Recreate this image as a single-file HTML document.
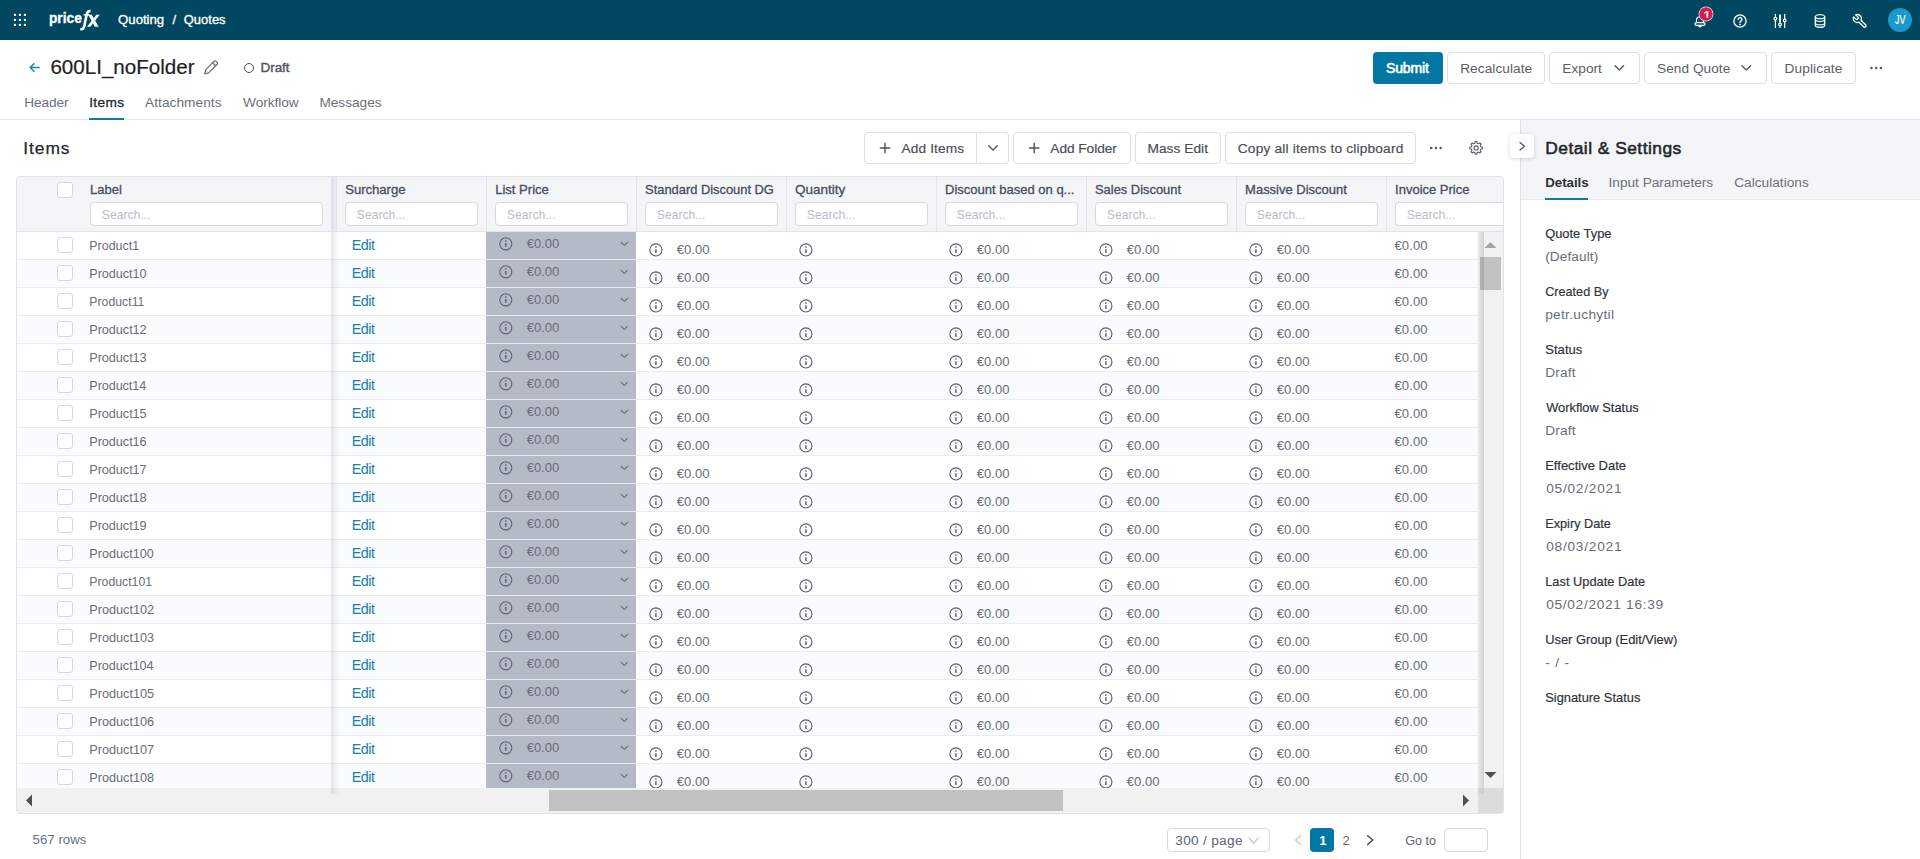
<!DOCTYPE html>
<html><head><meta charset="utf-8"><title>Quote 600LI_noFolder</title><style>html,body{margin:0;padding:0}body{width:1920px;height:859px;position:relative;overflow:hidden;background:#fff;font-family:"Liberation Sans",sans-serif}
body div,body span,body svg{position:absolute}span{white-space:pre;line-height:20px;height:20px}
.r{left:0;width:1461px;height:28px;border-bottom:1px solid #e9ebf1;box-sizing:border-box}
.cb{position:absolute;left:40px;top:5px;width:16px;height:16px;border:1px solid #d3d7e0;border-radius:3px;background:#fff;box-sizing:border-box}
.lp{position:absolute;left:469px;top:0;width:150px;height:27px;background:#b5bac7}
</style></head><body>
<div style="left:0px;top:0px;width:1920px;height:40px;background:#004861"></div>
<svg style="left:13px;top:13px" width="13.4" height="13.4" viewBox="-0.8 -0.8 13.4 13.4" fill="#fff"><rect x="0" y="0" width="2.3" height="2.3" rx="0.8"/><rect x="5" y="0" width="2.3" height="2.3" rx="0.8"/><rect x="10" y="0" width="2.3" height="2.3" rx="0.8"/><rect x="0" y="5" width="2.3" height="2.3" rx="0.8"/><rect x="5" y="5" width="2.3" height="2.3" rx="0.8"/><rect x="10" y="5" width="2.3" height="2.3" rx="0.8"/><rect x="0" y="10" width="2.3" height="2.3" rx="0.8"/><rect x="5" y="10" width="2.3" height="2.3" rx="0.8"/><rect x="10" y="10" width="2.3" height="2.3" rx="0.8"/></svg>
<span style="left:48.89px;top:8px;font-size:15px;font-weight:700;color:#fff;transform:scaleX(0.914);transform-origin:0 0;-webkit-text-stroke:0.35px #fff;">price</span>
<svg style="left:78px;top:8px" width="25" height="25" viewBox="0 0 25 25" fill="#fff" stroke="none"><path d="M2.3 21.1C4.9 21.7 5.8 20.2 6.4 17.4L8.5 7.2C9.1 4 10.3 2.6 12.6 3" fill="none" stroke="#fff" stroke-width="2.6" stroke-linecap="butt"/><path d="M5.6 6.9H11.6" fill="none" stroke="#fff" stroke-width="1.5"/><polygon points="10.2,6.8 13.8,6.8 20.6,18.7 16.8,18.7"/><polygon points="18.4,6.8 21.7,6.8 12.4,18.7 9,18.7"/></svg>
<span style="left:118.1px;top:10px;font-size:13.2px;letter-spacing:-0.02px;color:#fff;-webkit-text-stroke:0.35px #fff;">Quoting</span>
<span style="left:172.4px;top:10px;font-size:13px;color:#fff;-webkit-text-stroke:0.3px #fff;">/</span>
<span style="left:183.8px;top:10px;font-size:12.9px;letter-spacing:0.04px;color:#fff;-webkit-text-stroke:0.35px #fff;">Quotes</span>
<svg style="left:1693px;top:14px" width="15" height="16" viewBox="0 0 15 16" fill="none" stroke="#fff" stroke-width="1.15" stroke-linejoin="round" stroke-linecap="round"><path d="M3.5 8.6V6.2a3.5 3.5 0 0 1 7 0v2.4"/><rect x="2" y="8.6" width="10" height="2.8" rx="1.3"/><path d="M5.5 11.9a1.6 1.6 0 0 0 3 0"/></svg>
<svg style="left:1698px;top:6px" width="17" height="17" viewBox="0 0 17 17"><circle cx="8" cy="8" r="7.45" fill="#e2ebee"/><circle cx="8" cy="8" r="6.75" fill="#dc1850"/><path d="M6.2 7.2L9.2 5.3" stroke="#fff" stroke-width="1.3" fill="none"/><path d="M9.35 5.1V11.8" stroke="#fff" stroke-width="1.75" fill="none"/></svg>
<svg style="left:1732px;top:13px" width="17" height="17" viewBox="0 0 17 17" fill="none" stroke="#fff" stroke-width="1.35" stroke-linecap="round"><circle cx="8" cy="8" r="6.1"/><path d="M6.2 6.4a1.85 1.85 0 1 1 2.7 1.65c-.6.33-.9.7-.9 1.35"/><circle cx="8" cy="11.3" r=".55" fill="#fff" stroke-width=".6"/></svg>
<svg style="left:1772px;top:12px" width="17" height="18" viewBox="0 0 17 18" fill="none" stroke="#fff" stroke-width="1.25" stroke-linecap="round"><path d="M3.4 2.4v2.9M3.4 8.2v7.2M12.7 2.4v4.6M12.7 9.9v5.5M8 13.9v1.5"/><path d="M8 2.6v8.2" stroke-width="1.9" stroke-linecap="butt"/><circle cx="3.4" cy="6.75" r="1.35"/><circle cx="8" cy="12.4" r="1.35"/><circle cx="12.7" cy="8.45" r="1.35"/></svg>
<svg style="left:1813px;top:13px" width="15" height="17" viewBox="0 0 15 17" fill="none" stroke="#fff" stroke-width="1.3"><ellipse cx="7" cy="3.7" rx="4.7" ry="2"/><path d="M2.3 3.7v8.6c0 1.2 2.1 2.1 4.7 2.1s4.7-.9 4.7-2.1V3.7"/><path d="M2.3 6.6c0 1.1 2.1 1.9 4.7 1.9s4.7-.8 4.7-1.9M2.3 9.9c0 1.1 2.1 1.9 4.7 1.9s4.7-.8 4.7-1.9" stroke-width="1.15"/></svg>
<svg style="left:1852px;top:13px" width="17" height="17" viewBox="0 -0.3 25.5 25.5" fill="none" stroke="#fff" stroke-width="1.95" stroke-linejoin="round" stroke-linecap="round"><g transform="translate(24 0) scale(-1 1)"><path d="M14.7 6.3a1 1 0 0 0 0 1.4l1.6 1.6a1 1 0 0 0 1.4 0l3.77-3.77a6 6 0 0 1-7.94 7.94l-6.91 6.91a2.12 2.12 0 0 1-3-3l6.91-6.91a6 6 0 0 1 7.94-7.94l-3.76 3.76z"/></g></svg>
<div style="left:1888px;top:8px;width:24px;height:24px;border-radius:50%;background:#1b98cf"></div>
<span style="left:1895px;top:10px;font-size:13.4px;color:#fff;transform:scaleX(0.669);transform-origin:0 0;-webkit-text-stroke:0.2px #fff;">JV</span>
<svg style="left:28px;top:61px" width="15" height="14" viewBox="0 0 15 14" fill="none" stroke="#1483ae" stroke-width="1.5" stroke-linecap="round" stroke-linejoin="round"><path d="M11.2 6.5H2.4M6 2.7L2.2 6.5 6 10.3"/></svg>
<span style="left:50.4px;top:57px;font-size:20.6px;letter-spacing:-0.01px;color:#1f2125;-webkit-text-stroke:0.2px #1f2125;">600LI_noFolder</span>
<svg style="left:202px;top:59px" width="19" height="18" viewBox="0 0 19 18" fill="none" stroke="#6a6f7c" stroke-width="1.25" stroke-linejoin="round"><path d="M11.9 2.4a1.55 1.55 0 0 1 2.2 0l.9.9a1.55 1.55 0 0 1 0 2.2L6.6 13.9l-3.9 1 .9-4z"/><path d="M10.6 3.7l3.1 3.1"/></svg>
<div style="left:243.8px;top:62.8px;width:10.4px;height:10.4px;border-radius:50%;border:1.2px solid #4a4e57;box-sizing:border-box"></div>
<span style="left:260.6px;top:58px;font-size:13.5px;letter-spacing:-0.08px;color:#50535b;-webkit-text-stroke:0.4px #50535b;">Draft</span>
<span style="left:24.2px;top:93px;font-size:13.7px;letter-spacing:-0.1px;color:#6d7078;">Header</span>
<span style="left:89.2px;top:93px;font-size:13.7px;letter-spacing:0.38px;color:#25272c;-webkit-text-stroke:0.3px #25272c;">Items</span>
<span style="left:145.1px;top:93px;font-size:13.7px;letter-spacing:0.03px;color:#6d7078;">Attachments</span>
<span style="left:243.1px;top:93px;font-size:13.7px;letter-spacing:-0.06px;color:#6d7078;">Workflow</span>
<span style="left:319.4px;top:93px;font-size:13.7px;letter-spacing:-0.03px;color:#6d7078;">Messages</span>
<div style="left:0px;top:119px;width:1920px;height:1px;background:#e6e8ef"></div>
<div style="left:89px;top:117.5px;width:35px;height:2px;background:#0f7aa5"></div>
<div style="left:1373px;top:52px;width:70px;height:32px;background:#0078a3;border-radius:4px"></div>
<span style="left:1386px;top:58px;font-size:14px;letter-spacing:-0.16px;color:#fff;-webkit-text-stroke:0.6px #fff;">Submit</span>
<div style="left:1447px;top:52px;width:98px;height:32px;border:1px solid #dcdfe7;border-radius:4px;background:#fff;box-sizing:border-box"></div>
<span style="left:1460.2px;top:59px;font-size:13.7px;letter-spacing:0.05px;color:#5b5e66;">Recalculate</span>
<div style="left:1549px;top:52px;width:91px;height:32px;border:1px solid #dcdfe7;border-radius:4px;background:#fff;box-sizing:border-box"></div>
<span style="left:1562.3px;top:59px;font-size:13.7px;color:#5b5e66;">Export</span>
<div style="left:1644px;top:52px;width:123px;height:32px;border:1px solid #dcdfe7;border-radius:4px;background:#fff;box-sizing:border-box"></div>
<span style="left:1657.1px;top:59px;font-size:13.6px;letter-spacing:0.06px;color:#5b5e66;">Send Quote</span>
<div style="left:1771px;top:52px;width:85px;height:32px;border:1px solid #dcdfe7;border-radius:4px;background:#fff;box-sizing:border-box"></div>
<span style="left:1784.6px;top:59px;font-size:13.7px;letter-spacing:0.09px;color:#5b5e66;">Duplicate</span>
<svg style="left:1613px;top:64px" width="12" height="8" viewBox="-0.8 -0.5 12 8" fill="none" stroke="#555960" stroke-width="1.4" stroke-linecap="round" stroke-linejoin="round"><path d="M1.2 1.2L5.5 5.4 9.8 1.2"/></svg>
<svg style="left:1740px;top:64px" width="12" height="8" viewBox="-0.8 -0.5 12 8" fill="none" stroke="#555960" stroke-width="1.4" stroke-linecap="round" stroke-linejoin="round"><path d="M1.2 1.2L5.5 5.4 9.8 1.2"/></svg>
<svg style="left:1869px;top:65px" width="15" height="7" viewBox="0 0 15 7" fill="#50545c"><circle cx="2.45" cy="2.9" r="1.25"/><circle cx="7.15" cy="2.9" r="1.25"/><circle cx="11.85" cy="2.9" r="1.25"/></svg>
<span style="left:23.3px;top:138px;font-size:17.4px;letter-spacing:0.93px;color:#25272c;-webkit-text-stroke:0.25px #25272c;">Items</span>
<div style="left:864px;top:132px;width:145px;height:32px;border:1px solid #dcdfe7;border-radius:4px;background:#fff;box-sizing:border-box"></div>
<div style="left:976px;top:133px;width:1px;height:30px;background:#dcdfe7"></div>
<div style="left:1013px;top:132px;width:118px;height:32px;border:1px solid #dcdfe7;border-radius:4px;background:#fff;box-sizing:border-box"></div>
<div style="left:1135px;top:132px;width:86px;height:32px;border:1px solid #dcdfe7;border-radius:4px;background:#fff;box-sizing:border-box"></div>
<div style="left:1225px;top:132px;width:191px;height:32px;border:1px solid #dcdfe7;border-radius:4px;background:#fff;box-sizing:border-box"></div>
<svg style="left:879px;top:142px" width="12" height="12" viewBox="-0.5 -0.5 12 12" stroke="#4d5058" stroke-width="1.4" stroke-linecap="round"><path d="M5.5 .8v9.4M.8 5.5h9.4"/></svg>
<svg style="left:1028px;top:142px" width="12" height="12" viewBox="-0.7 -0.5 12 12" stroke="#4d5058" stroke-width="1.4" stroke-linecap="round"><path d="M5.5 .8v9.4M.8 5.5h9.4"/></svg>
<span style="left:901.6px;top:139px;font-size:13.7px;letter-spacing:0.1px;color:#4c4f57;-webkit-text-stroke:0.2px #4c4f57;">Add Items</span>
<span style="left:1050.3px;top:139px;font-size:13.7px;letter-spacing:-0.04px;color:#4c4f57;-webkit-text-stroke:0.2px #4c4f57;">Add Folder</span>
<span style="left:1147.5px;top:139px;font-size:13.7px;letter-spacing:0.05px;color:#4c4f57;-webkit-text-stroke:0.2px #4c4f57;">Mass Edit</span>
<span style="left:1237.8px;top:139px;font-size:13.7px;letter-spacing:0.19px;color:#4c4f57;-webkit-text-stroke:0.2px #4c4f57;">Copy all items to clipboard</span>
<svg style="left:987px;top:144px" width="12" height="8" viewBox="-0.5 -0.5 12 8" fill="none" stroke="#555960" stroke-width="1.4" stroke-linecap="round" stroke-linejoin="round"><path d="M1.2 1.2L5.5 5.4 9.8 1.2"/></svg>
<svg style="left:1429px;top:145px" width="15" height="7" viewBox="0 0 15 7" fill="#50545c"><circle cx="2.25" cy="2.9" r="1.25"/><circle cx="6.95" cy="2.9" r="1.25"/><circle cx="11.65" cy="2.9" r="1.25"/></svg>
<svg style="left:1468px;top:139px" width="17" height="17" viewBox="-0.1 -0.9 17 17" fill="none" stroke="#5f636c" stroke-width="1.15" stroke-linejoin="round"><circle cx="8" cy="8" r="2.1" stroke-width="1.15"/><path d="M6.87 3.28L7.15 1.71L8.85 1.71L9.13 3.28L10.53 3.86L11.85 2.95L13.05 4.15L12.14 5.47L12.72 6.87L14.29 7.15L14.29 8.85L12.72 9.13L12.14 10.53L13.05 11.85L11.85 13.05L10.53 12.14L9.13 12.72L8.85 14.29L7.15 14.29L6.87 12.72L5.47 12.14L4.15 13.05L2.95 11.85L3.86 10.53L3.28 9.13L1.71 8.85L1.71 7.15L3.28 6.87L3.86 5.47L2.95 4.15L4.15 2.95L5.47 3.86z"/></svg>
<div style="left:16px;top:176px;width:1488px;height:638px;border:1px solid #dfe2ea;border-radius:4px;box-sizing:border-box;background:#fff"></div>
<div style="left:17px;top:177px;width:1486px;height:54px;background:#f4f5f7;border-radius:3px 3px 0 0"></div>
<div style="left:17px;top:231px;width:1486px;height:1px;background:#dfe2ea"></div>
<div style="left:486px;top:177px;width:1px;height:54px;background:#e2e5ec"></div>
<div style="left:636px;top:177px;width:1px;height:54px;background:#e2e5ec"></div>
<div style="left:786px;top:177px;width:1px;height:54px;background:#e2e5ec"></div>
<div style="left:936px;top:177px;width:1px;height:54px;background:#e2e5ec"></div>
<div style="left:1086px;top:177px;width:1px;height:54px;background:#e2e5ec"></div>
<div style="left:1236px;top:177px;width:1px;height:54px;background:#e2e5ec"></div>
<div style="left:1386px;top:177px;width:1px;height:54px;background:#e2e5ec"></div>
<div style="left:331px;top:177px;width:6px;height:54px;background:linear-gradient(90deg,#dcdee5,#f0f1f5)"></div>
<div style="left:336px;top:177px;width:1px;height:54px;background:#dfe2e9"></div>
<div style="left:57px;top:182px;width:16px;height:16px;border:1px solid #d3d7e0;border-radius:3px;background:#fff;box-sizing:border-box"></div>
<span style="left:90px;top:180px;font-size:13px;letter-spacing:0.05px;color:#474d5e;-webkit-text-stroke:0.3px #474d5e;">Label</span>
<div style="left:90px;top:202px;width:233px;height:24px;border:1px solid #d9d9d9;border-radius:4px;background:#fff;box-sizing:border-box"></div>
<span style="left:101.8px;top:205px;font-size:12.1px;letter-spacing:0.03px;color:#b9bdc6;">Search...</span>
<span style="left:345.2px;top:180px;font-size:13.2px;letter-spacing:-0.06px;color:#474d5e;-webkit-text-stroke:0.3px #474d5e;">Surcharge</span>
<div style="left:345px;top:202px;width:133px;height:24px;border:1px solid #d9d9d9;border-radius:4px;background:#fff;box-sizing:border-box"></div>
<span style="left:356.8px;top:205px;font-size:12.1px;letter-spacing:0.02px;color:#b9bdc6;">Search...</span>
<span style="left:495.2px;top:180px;font-size:13.1px;letter-spacing:-0.02px;color:#474d5e;-webkit-text-stroke:0.3px #474d5e;">List Price</span>
<div style="left:495px;top:202px;width:133px;height:24px;border:1px solid #d9d9d9;border-radius:4px;background:#fff;box-sizing:border-box"></div>
<span style="left:506.8px;top:205px;font-size:12.1px;letter-spacing:0.02px;color:#b9bdc6;">Search...</span>
<span style="left:645.1px;top:180px;font-size:12.9px;letter-spacing:-0.01px;color:#474d5e;-webkit-text-stroke:0.3px #474d5e;">Standard Discount DG</span>
<div style="left:645px;top:202px;width:133px;height:24px;border:1px solid #d9d9d9;border-radius:4px;background:#fff;box-sizing:border-box"></div>
<span style="left:656.8px;top:205px;font-size:12.1px;letter-spacing:0.03px;color:#b9bdc6;">Search...</span>
<span style="left:795px;top:180px;font-size:13.5px;color:#474d5e;-webkit-text-stroke:0.3px #474d5e;">Quantity</span>
<div style="left:795px;top:202px;width:133px;height:24px;border:1px solid #d9d9d9;border-radius:4px;background:#fff;box-sizing:border-box"></div>
<span style="left:806.8px;top:205px;font-size:12.1px;letter-spacing:0.03px;color:#b9bdc6;">Search...</span>
<span style="left:945.1px;top:180px;font-size:13px;letter-spacing:0px;color:#474d5e;-webkit-text-stroke:0.3px #474d5e;">Discount based on q...</span>
<div style="left:945px;top:202px;width:133px;height:24px;border:1px solid #d9d9d9;border-radius:4px;background:#fff;box-sizing:border-box"></div>
<span style="left:956.8px;top:205px;font-size:12.1px;letter-spacing:0.03px;color:#b9bdc6;">Search...</span>
<span style="left:1095px;top:180px;font-size:12.9px;color:#474d5e;-webkit-text-stroke:0.3px #474d5e;">Sales Discount</span>
<div style="left:1095px;top:202px;width:133px;height:24px;border:1px solid #d9d9d9;border-radius:4px;background:#fff;box-sizing:border-box"></div>
<span style="left:1106.8px;top:205px;font-size:12.1px;letter-spacing:0.03px;color:#b9bdc6;">Search...</span>
<span style="left:1245.1px;top:180px;font-size:13px;letter-spacing:-0.01px;color:#474d5e;-webkit-text-stroke:0.3px #474d5e;">Massive Discount</span>
<div style="left:1245px;top:202px;width:133px;height:24px;border:1px solid #d9d9d9;border-radius:4px;background:#fff;box-sizing:border-box"></div>
<span style="left:1256.8px;top:205px;font-size:12.1px;letter-spacing:0.03px;color:#b9bdc6;">Search...</span>
<span style="left:1395.1px;top:180px;font-size:13px;letter-spacing:-0.01px;color:#474d5e;-webkit-text-stroke:0.3px #474d5e;">Invoice Price</span>
<div style="left:1395px;top:202px;width:108px;height:24px;border:1px solid #d9d9d9;border-right:0;border-radius:4px 0 0 4px;background:#fff;box-sizing:border-box"></div>
<span style="left:1406.8px;top:205px;font-size:12.1px;letter-spacing:0.03px;color:#b9bdc6;">Search...</span>
<div style="left:17px;top:232px;width:1461px;height:556px;overflow:hidden">
<div class="r" style="top:0px;background:#fff">
<i class="cb"></i><i class="lp"></i>
<span style="left:72.3px;top:4px;font-size:12.4px;letter-spacing:0.03px;color:#6a6d75;">Product1</span>
<span style="left:334.7px;top:3px;font-size:14.3px;letter-spacing:-0.43px;color:#1a80a8;">Edit</span>
<svg class="" style="left:481px;top:4px" width="16" height="16" viewBox="-0.3 -0.3 16 16" fill="none" stroke="#5d616b" stroke-width="1.12"><circle cx="7.5" cy="7.5" r="6.05"/><path d="M7.5 6.8v3.7" stroke-width="1.45"/><circle cx="7.5" cy="4.65" r=".55" fill="#5d616b" stroke-width=".6"/></svg>
<span style="left:509.7px;top:2px;font-size:13.1px;letter-spacing:-0.02px;color:#6a6d75;">€0.00</span>
<svg style="left:603px;top:9px" width="9" height="7" viewBox="-0.3 -0.3 9 7" fill="none" stroke="#5c6069" stroke-width="1.05" stroke-linecap="round" stroke-linejoin="round"><path d="M.9 1.1L4 4.2 7.1 1.1"/></svg>
<svg class="" style="left:631px;top:10px" width="16" height="16" viewBox="-0.4 -0.4 16 16" fill="none" stroke="#5d616b" stroke-width="1.12"><circle cx="7.5" cy="7.5" r="6.05"/><path d="M7.5 6.8v3.7" stroke-width="1.45"/><circle cx="7.5" cy="4.65" r=".55" fill="#5d616b" stroke-width=".6"/></svg>
<span style="left:659.7px;top:8px;font-size:13.1px;letter-spacing:0.03px;color:#6a6d75;">€0.00</span>
<svg class="" style="left:781px;top:10px" width="16" height="16" viewBox="-0.4 -0.4 16 16" fill="none" stroke="#5d616b" stroke-width="1.12"><circle cx="7.5" cy="7.5" r="6.05"/><path d="M7.5 6.8v3.7" stroke-width="1.45"/><circle cx="7.5" cy="4.65" r=".55" fill="#5d616b" stroke-width=".6"/></svg>
<svg class="" style="left:931px;top:10px" width="16" height="16" viewBox="-0.4 -0.4 16 16" fill="none" stroke="#5d616b" stroke-width="1.12"><circle cx="7.5" cy="7.5" r="6.05"/><path d="M7.5 6.8v3.7" stroke-width="1.45"/><circle cx="7.5" cy="4.65" r=".55" fill="#5d616b" stroke-width=".6"/></svg>
<span style="left:959.7px;top:8px;font-size:13.1px;letter-spacing:0.03px;color:#6a6d75;">€0.00</span>
<svg class="" style="left:1081px;top:10px" width="16" height="16" viewBox="-0.4 -0.4 16 16" fill="none" stroke="#5d616b" stroke-width="1.12"><circle cx="7.5" cy="7.5" r="6.05"/><path d="M7.5 6.8v3.7" stroke-width="1.45"/><circle cx="7.5" cy="4.65" r=".55" fill="#5d616b" stroke-width=".6"/></svg>
<span style="left:1109.7px;top:8px;font-size:13.1px;letter-spacing:0.02px;color:#6a6d75;">€0.00</span>
<svg class="" style="left:1231px;top:10px" width="16" height="16" viewBox="-0.4 -0.4 16 16" fill="none" stroke="#5d616b" stroke-width="1.12"><circle cx="7.5" cy="7.5" r="6.05"/><path d="M7.5 6.8v3.7" stroke-width="1.45"/><circle cx="7.5" cy="4.65" r=".55" fill="#5d616b" stroke-width=".6"/></svg>
<span style="left:1259.7px;top:8px;font-size:13.1px;letter-spacing:0.02px;color:#6a6d75;">€0.00</span>
<span style="left:1377.5px;top:4px;font-size:13.1px;letter-spacing:0.07px;color:#6a6d75;">€0.00</span>
</div>
<div class="r" style="top:28px;background:#fafbfd">
<i class="cb"></i><i class="lp"></i>
<span style="left:72.3px;top:4px;font-size:12.6px;letter-spacing:-0.04px;color:#6a6d75;">Product10</span>
<span style="left:334.7px;top:3px;font-size:14.3px;letter-spacing:-0.43px;color:#1a80a8;">Edit</span>
<svg class="" style="left:481px;top:4px" width="16" height="16" viewBox="-0.3 -0.3 16 16" fill="none" stroke="#5d616b" stroke-width="1.12"><circle cx="7.5" cy="7.5" r="6.05"/><path d="M7.5 6.8v3.7" stroke-width="1.45"/><circle cx="7.5" cy="4.65" r=".55" fill="#5d616b" stroke-width=".6"/></svg>
<span style="left:509.7px;top:2px;font-size:13.1px;letter-spacing:-0.02px;color:#6a6d75;">€0.00</span>
<svg style="left:603px;top:9px" width="9" height="7" viewBox="-0.3 -0.3 9 7" fill="none" stroke="#5c6069" stroke-width="1.05" stroke-linecap="round" stroke-linejoin="round"><path d="M.9 1.1L4 4.2 7.1 1.1"/></svg>
<svg class="" style="left:631px;top:10px" width="16" height="16" viewBox="-0.4 -0.4 16 16" fill="none" stroke="#5d616b" stroke-width="1.12"><circle cx="7.5" cy="7.5" r="6.05"/><path d="M7.5 6.8v3.7" stroke-width="1.45"/><circle cx="7.5" cy="4.65" r=".55" fill="#5d616b" stroke-width=".6"/></svg>
<span style="left:659.7px;top:8px;font-size:13.1px;letter-spacing:0.03px;color:#6a6d75;">€0.00</span>
<svg class="" style="left:781px;top:10px" width="16" height="16" viewBox="-0.4 -0.4 16 16" fill="none" stroke="#5d616b" stroke-width="1.12"><circle cx="7.5" cy="7.5" r="6.05"/><path d="M7.5 6.8v3.7" stroke-width="1.45"/><circle cx="7.5" cy="4.65" r=".55" fill="#5d616b" stroke-width=".6"/></svg>
<svg class="" style="left:931px;top:10px" width="16" height="16" viewBox="-0.4 -0.4 16 16" fill="none" stroke="#5d616b" stroke-width="1.12"><circle cx="7.5" cy="7.5" r="6.05"/><path d="M7.5 6.8v3.7" stroke-width="1.45"/><circle cx="7.5" cy="4.65" r=".55" fill="#5d616b" stroke-width=".6"/></svg>
<span style="left:959.7px;top:8px;font-size:13.1px;letter-spacing:0.03px;color:#6a6d75;">€0.00</span>
<svg class="" style="left:1081px;top:10px" width="16" height="16" viewBox="-0.4 -0.4 16 16" fill="none" stroke="#5d616b" stroke-width="1.12"><circle cx="7.5" cy="7.5" r="6.05"/><path d="M7.5 6.8v3.7" stroke-width="1.45"/><circle cx="7.5" cy="4.65" r=".55" fill="#5d616b" stroke-width=".6"/></svg>
<span style="left:1109.7px;top:8px;font-size:13.1px;letter-spacing:0.02px;color:#6a6d75;">€0.00</span>
<svg class="" style="left:1231px;top:10px" width="16" height="16" viewBox="-0.4 -0.4 16 16" fill="none" stroke="#5d616b" stroke-width="1.12"><circle cx="7.5" cy="7.5" r="6.05"/><path d="M7.5 6.8v3.7" stroke-width="1.45"/><circle cx="7.5" cy="4.65" r=".55" fill="#5d616b" stroke-width=".6"/></svg>
<span style="left:1259.7px;top:8px;font-size:13.1px;letter-spacing:0.02px;color:#6a6d75;">€0.00</span>
<span style="left:1377.5px;top:4px;font-size:13.1px;letter-spacing:0.07px;color:#6a6d75;">€0.00</span>
</div>
<div class="r" style="top:56px;background:#fff">
<i class="cb"></i><i class="lp"></i>
<span style="left:72.3px;top:4px;font-size:12.2px;letter-spacing:0.05px;color:#6a6d75;">Product11</span>
<span style="left:334.7px;top:3px;font-size:14.3px;letter-spacing:-0.43px;color:#1a80a8;">Edit</span>
<svg class="" style="left:481px;top:4px" width="16" height="16" viewBox="-0.3 -0.3 16 16" fill="none" stroke="#5d616b" stroke-width="1.12"><circle cx="7.5" cy="7.5" r="6.05"/><path d="M7.5 6.8v3.7" stroke-width="1.45"/><circle cx="7.5" cy="4.65" r=".55" fill="#5d616b" stroke-width=".6"/></svg>
<span style="left:509.7px;top:2px;font-size:13.1px;letter-spacing:-0.02px;color:#6a6d75;">€0.00</span>
<svg style="left:603px;top:9px" width="9" height="7" viewBox="-0.3 -0.3 9 7" fill="none" stroke="#5c6069" stroke-width="1.05" stroke-linecap="round" stroke-linejoin="round"><path d="M.9 1.1L4 4.2 7.1 1.1"/></svg>
<svg class="" style="left:631px;top:10px" width="16" height="16" viewBox="-0.4 -0.4 16 16" fill="none" stroke="#5d616b" stroke-width="1.12"><circle cx="7.5" cy="7.5" r="6.05"/><path d="M7.5 6.8v3.7" stroke-width="1.45"/><circle cx="7.5" cy="4.65" r=".55" fill="#5d616b" stroke-width=".6"/></svg>
<span style="left:659.7px;top:8px;font-size:13.1px;letter-spacing:0.03px;color:#6a6d75;">€0.00</span>
<svg class="" style="left:781px;top:10px" width="16" height="16" viewBox="-0.4 -0.4 16 16" fill="none" stroke="#5d616b" stroke-width="1.12"><circle cx="7.5" cy="7.5" r="6.05"/><path d="M7.5 6.8v3.7" stroke-width="1.45"/><circle cx="7.5" cy="4.65" r=".55" fill="#5d616b" stroke-width=".6"/></svg>
<svg class="" style="left:931px;top:10px" width="16" height="16" viewBox="-0.4 -0.4 16 16" fill="none" stroke="#5d616b" stroke-width="1.12"><circle cx="7.5" cy="7.5" r="6.05"/><path d="M7.5 6.8v3.7" stroke-width="1.45"/><circle cx="7.5" cy="4.65" r=".55" fill="#5d616b" stroke-width=".6"/></svg>
<span style="left:959.7px;top:8px;font-size:13.1px;letter-spacing:0.03px;color:#6a6d75;">€0.00</span>
<svg class="" style="left:1081px;top:10px" width="16" height="16" viewBox="-0.4 -0.4 16 16" fill="none" stroke="#5d616b" stroke-width="1.12"><circle cx="7.5" cy="7.5" r="6.05"/><path d="M7.5 6.8v3.7" stroke-width="1.45"/><circle cx="7.5" cy="4.65" r=".55" fill="#5d616b" stroke-width=".6"/></svg>
<span style="left:1109.7px;top:8px;font-size:13.1px;letter-spacing:0.02px;color:#6a6d75;">€0.00</span>
<svg class="" style="left:1231px;top:10px" width="16" height="16" viewBox="-0.4 -0.4 16 16" fill="none" stroke="#5d616b" stroke-width="1.12"><circle cx="7.5" cy="7.5" r="6.05"/><path d="M7.5 6.8v3.7" stroke-width="1.45"/><circle cx="7.5" cy="4.65" r=".55" fill="#5d616b" stroke-width=".6"/></svg>
<span style="left:1259.7px;top:8px;font-size:13.1px;letter-spacing:0.02px;color:#6a6d75;">€0.00</span>
<span style="left:1377.5px;top:4px;font-size:13.1px;letter-spacing:0.07px;color:#6a6d75;">€0.00</span>
</div>
<div class="r" style="top:84px;background:#fafbfd">
<i class="cb"></i><i class="lp"></i>
<span style="left:72.3px;top:4px;font-size:12.7px;letter-spacing:-0.06px;color:#6a6d75;">Product12</span>
<span style="left:334.7px;top:3px;font-size:14.3px;letter-spacing:-0.43px;color:#1a80a8;">Edit</span>
<svg class="" style="left:481px;top:4px" width="16" height="16" viewBox="-0.3 -0.3 16 16" fill="none" stroke="#5d616b" stroke-width="1.12"><circle cx="7.5" cy="7.5" r="6.05"/><path d="M7.5 6.8v3.7" stroke-width="1.45"/><circle cx="7.5" cy="4.65" r=".55" fill="#5d616b" stroke-width=".6"/></svg>
<span style="left:509.7px;top:2px;font-size:13.1px;letter-spacing:-0.02px;color:#6a6d75;">€0.00</span>
<svg style="left:603px;top:9px" width="9" height="7" viewBox="-0.3 -0.3 9 7" fill="none" stroke="#5c6069" stroke-width="1.05" stroke-linecap="round" stroke-linejoin="round"><path d="M.9 1.1L4 4.2 7.1 1.1"/></svg>
<svg class="" style="left:631px;top:10px" width="16" height="16" viewBox="-0.4 -0.4 16 16" fill="none" stroke="#5d616b" stroke-width="1.12"><circle cx="7.5" cy="7.5" r="6.05"/><path d="M7.5 6.8v3.7" stroke-width="1.45"/><circle cx="7.5" cy="4.65" r=".55" fill="#5d616b" stroke-width=".6"/></svg>
<span style="left:659.7px;top:8px;font-size:13.1px;letter-spacing:0.03px;color:#6a6d75;">€0.00</span>
<svg class="" style="left:781px;top:10px" width="16" height="16" viewBox="-0.4 -0.4 16 16" fill="none" stroke="#5d616b" stroke-width="1.12"><circle cx="7.5" cy="7.5" r="6.05"/><path d="M7.5 6.8v3.7" stroke-width="1.45"/><circle cx="7.5" cy="4.65" r=".55" fill="#5d616b" stroke-width=".6"/></svg>
<svg class="" style="left:931px;top:10px" width="16" height="16" viewBox="-0.4 -0.4 16 16" fill="none" stroke="#5d616b" stroke-width="1.12"><circle cx="7.5" cy="7.5" r="6.05"/><path d="M7.5 6.8v3.7" stroke-width="1.45"/><circle cx="7.5" cy="4.65" r=".55" fill="#5d616b" stroke-width=".6"/></svg>
<span style="left:959.7px;top:8px;font-size:13.1px;letter-spacing:0.03px;color:#6a6d75;">€0.00</span>
<svg class="" style="left:1081px;top:10px" width="16" height="16" viewBox="-0.4 -0.4 16 16" fill="none" stroke="#5d616b" stroke-width="1.12"><circle cx="7.5" cy="7.5" r="6.05"/><path d="M7.5 6.8v3.7" stroke-width="1.45"/><circle cx="7.5" cy="4.65" r=".55" fill="#5d616b" stroke-width=".6"/></svg>
<span style="left:1109.7px;top:8px;font-size:13.1px;letter-spacing:0.02px;color:#6a6d75;">€0.00</span>
<svg class="" style="left:1231px;top:10px" width="16" height="16" viewBox="-0.4 -0.4 16 16" fill="none" stroke="#5d616b" stroke-width="1.12"><circle cx="7.5" cy="7.5" r="6.05"/><path d="M7.5 6.8v3.7" stroke-width="1.45"/><circle cx="7.5" cy="4.65" r=".55" fill="#5d616b" stroke-width=".6"/></svg>
<span style="left:1259.7px;top:8px;font-size:13.1px;letter-spacing:0.02px;color:#6a6d75;">€0.00</span>
<span style="left:1377.5px;top:4px;font-size:13.1px;letter-spacing:0.07px;color:#6a6d75;">€0.00</span>
</div>
<div class="r" style="top:112px;background:#fff">
<i class="cb"></i><i class="lp"></i>
<span style="left:72.3px;top:4px;font-size:12.7px;letter-spacing:-0.06px;color:#6a6d75;">Product13</span>
<span style="left:334.7px;top:3px;font-size:14.3px;letter-spacing:-0.43px;color:#1a80a8;">Edit</span>
<svg class="" style="left:481px;top:4px" width="16" height="16" viewBox="-0.3 -0.3 16 16" fill="none" stroke="#5d616b" stroke-width="1.12"><circle cx="7.5" cy="7.5" r="6.05"/><path d="M7.5 6.8v3.7" stroke-width="1.45"/><circle cx="7.5" cy="4.65" r=".55" fill="#5d616b" stroke-width=".6"/></svg>
<span style="left:509.7px;top:2px;font-size:13.1px;letter-spacing:-0.02px;color:#6a6d75;">€0.00</span>
<svg style="left:603px;top:9px" width="9" height="7" viewBox="-0.3 -0.3 9 7" fill="none" stroke="#5c6069" stroke-width="1.05" stroke-linecap="round" stroke-linejoin="round"><path d="M.9 1.1L4 4.2 7.1 1.1"/></svg>
<svg class="" style="left:631px;top:10px" width="16" height="16" viewBox="-0.4 -0.4 16 16" fill="none" stroke="#5d616b" stroke-width="1.12"><circle cx="7.5" cy="7.5" r="6.05"/><path d="M7.5 6.8v3.7" stroke-width="1.45"/><circle cx="7.5" cy="4.65" r=".55" fill="#5d616b" stroke-width=".6"/></svg>
<span style="left:659.7px;top:8px;font-size:13.1px;letter-spacing:0.03px;color:#6a6d75;">€0.00</span>
<svg class="" style="left:781px;top:10px" width="16" height="16" viewBox="-0.4 -0.4 16 16" fill="none" stroke="#5d616b" stroke-width="1.12"><circle cx="7.5" cy="7.5" r="6.05"/><path d="M7.5 6.8v3.7" stroke-width="1.45"/><circle cx="7.5" cy="4.65" r=".55" fill="#5d616b" stroke-width=".6"/></svg>
<svg class="" style="left:931px;top:10px" width="16" height="16" viewBox="-0.4 -0.4 16 16" fill="none" stroke="#5d616b" stroke-width="1.12"><circle cx="7.5" cy="7.5" r="6.05"/><path d="M7.5 6.8v3.7" stroke-width="1.45"/><circle cx="7.5" cy="4.65" r=".55" fill="#5d616b" stroke-width=".6"/></svg>
<span style="left:959.7px;top:8px;font-size:13.1px;letter-spacing:0.03px;color:#6a6d75;">€0.00</span>
<svg class="" style="left:1081px;top:10px" width="16" height="16" viewBox="-0.4 -0.4 16 16" fill="none" stroke="#5d616b" stroke-width="1.12"><circle cx="7.5" cy="7.5" r="6.05"/><path d="M7.5 6.8v3.7" stroke-width="1.45"/><circle cx="7.5" cy="4.65" r=".55" fill="#5d616b" stroke-width=".6"/></svg>
<span style="left:1109.7px;top:8px;font-size:13.1px;letter-spacing:0.02px;color:#6a6d75;">€0.00</span>
<svg class="" style="left:1231px;top:10px" width="16" height="16" viewBox="-0.4 -0.4 16 16" fill="none" stroke="#5d616b" stroke-width="1.12"><circle cx="7.5" cy="7.5" r="6.05"/><path d="M7.5 6.8v3.7" stroke-width="1.45"/><circle cx="7.5" cy="4.65" r=".55" fill="#5d616b" stroke-width=".6"/></svg>
<span style="left:1259.7px;top:8px;font-size:13.1px;letter-spacing:0.02px;color:#6a6d75;">€0.00</span>
<span style="left:1377.5px;top:4px;font-size:13.1px;letter-spacing:0.07px;color:#6a6d75;">€0.00</span>
</div>
<div class="r" style="top:140px;background:#fafbfd">
<i class="cb"></i><i class="lp"></i>
<span style="left:72.3px;top:4px;font-size:12.6px;letter-spacing:-0.06px;color:#6a6d75;">Product14</span>
<span style="left:334.7px;top:3px;font-size:14.3px;letter-spacing:-0.43px;color:#1a80a8;">Edit</span>
<svg class="" style="left:481px;top:4px" width="16" height="16" viewBox="-0.3 -0.3 16 16" fill="none" stroke="#5d616b" stroke-width="1.12"><circle cx="7.5" cy="7.5" r="6.05"/><path d="M7.5 6.8v3.7" stroke-width="1.45"/><circle cx="7.5" cy="4.65" r=".55" fill="#5d616b" stroke-width=".6"/></svg>
<span style="left:509.7px;top:2px;font-size:13.1px;letter-spacing:-0.02px;color:#6a6d75;">€0.00</span>
<svg style="left:603px;top:9px" width="9" height="7" viewBox="-0.3 -0.3 9 7" fill="none" stroke="#5c6069" stroke-width="1.05" stroke-linecap="round" stroke-linejoin="round"><path d="M.9 1.1L4 4.2 7.1 1.1"/></svg>
<svg class="" style="left:631px;top:10px" width="16" height="16" viewBox="-0.4 -0.4 16 16" fill="none" stroke="#5d616b" stroke-width="1.12"><circle cx="7.5" cy="7.5" r="6.05"/><path d="M7.5 6.8v3.7" stroke-width="1.45"/><circle cx="7.5" cy="4.65" r=".55" fill="#5d616b" stroke-width=".6"/></svg>
<span style="left:659.7px;top:8px;font-size:13.1px;letter-spacing:0.03px;color:#6a6d75;">€0.00</span>
<svg class="" style="left:781px;top:10px" width="16" height="16" viewBox="-0.4 -0.4 16 16" fill="none" stroke="#5d616b" stroke-width="1.12"><circle cx="7.5" cy="7.5" r="6.05"/><path d="M7.5 6.8v3.7" stroke-width="1.45"/><circle cx="7.5" cy="4.65" r=".55" fill="#5d616b" stroke-width=".6"/></svg>
<svg class="" style="left:931px;top:10px" width="16" height="16" viewBox="-0.4 -0.4 16 16" fill="none" stroke="#5d616b" stroke-width="1.12"><circle cx="7.5" cy="7.5" r="6.05"/><path d="M7.5 6.8v3.7" stroke-width="1.45"/><circle cx="7.5" cy="4.65" r=".55" fill="#5d616b" stroke-width=".6"/></svg>
<span style="left:959.7px;top:8px;font-size:13.1px;letter-spacing:0.03px;color:#6a6d75;">€0.00</span>
<svg class="" style="left:1081px;top:10px" width="16" height="16" viewBox="-0.4 -0.4 16 16" fill="none" stroke="#5d616b" stroke-width="1.12"><circle cx="7.5" cy="7.5" r="6.05"/><path d="M7.5 6.8v3.7" stroke-width="1.45"/><circle cx="7.5" cy="4.65" r=".55" fill="#5d616b" stroke-width=".6"/></svg>
<span style="left:1109.7px;top:8px;font-size:13.1px;letter-spacing:0.02px;color:#6a6d75;">€0.00</span>
<svg class="" style="left:1231px;top:10px" width="16" height="16" viewBox="-0.4 -0.4 16 16" fill="none" stroke="#5d616b" stroke-width="1.12"><circle cx="7.5" cy="7.5" r="6.05"/><path d="M7.5 6.8v3.7" stroke-width="1.45"/><circle cx="7.5" cy="4.65" r=".55" fill="#5d616b" stroke-width=".6"/></svg>
<span style="left:1259.7px;top:8px;font-size:13.1px;letter-spacing:0.02px;color:#6a6d75;">€0.00</span>
<span style="left:1377.5px;top:4px;font-size:13.1px;letter-spacing:0.07px;color:#6a6d75;">€0.00</span>
</div>
<div class="r" style="top:168px;background:#fff">
<i class="cb"></i><i class="lp"></i>
<span style="left:72.3px;top:4px;font-size:12.7px;letter-spacing:-0.06px;color:#6a6d75;">Product15</span>
<span style="left:334.7px;top:3px;font-size:14.3px;letter-spacing:-0.43px;color:#1a80a8;">Edit</span>
<svg class="" style="left:481px;top:4px" width="16" height="16" viewBox="-0.3 -0.3 16 16" fill="none" stroke="#5d616b" stroke-width="1.12"><circle cx="7.5" cy="7.5" r="6.05"/><path d="M7.5 6.8v3.7" stroke-width="1.45"/><circle cx="7.5" cy="4.65" r=".55" fill="#5d616b" stroke-width=".6"/></svg>
<span style="left:509.7px;top:2px;font-size:13.1px;letter-spacing:-0.02px;color:#6a6d75;">€0.00</span>
<svg style="left:603px;top:9px" width="9" height="7" viewBox="-0.3 -0.3 9 7" fill="none" stroke="#5c6069" stroke-width="1.05" stroke-linecap="round" stroke-linejoin="round"><path d="M.9 1.1L4 4.2 7.1 1.1"/></svg>
<svg class="" style="left:631px;top:10px" width="16" height="16" viewBox="-0.4 -0.4 16 16" fill="none" stroke="#5d616b" stroke-width="1.12"><circle cx="7.5" cy="7.5" r="6.05"/><path d="M7.5 6.8v3.7" stroke-width="1.45"/><circle cx="7.5" cy="4.65" r=".55" fill="#5d616b" stroke-width=".6"/></svg>
<span style="left:659.7px;top:8px;font-size:13.1px;letter-spacing:0.03px;color:#6a6d75;">€0.00</span>
<svg class="" style="left:781px;top:10px" width="16" height="16" viewBox="-0.4 -0.4 16 16" fill="none" stroke="#5d616b" stroke-width="1.12"><circle cx="7.5" cy="7.5" r="6.05"/><path d="M7.5 6.8v3.7" stroke-width="1.45"/><circle cx="7.5" cy="4.65" r=".55" fill="#5d616b" stroke-width=".6"/></svg>
<svg class="" style="left:931px;top:10px" width="16" height="16" viewBox="-0.4 -0.4 16 16" fill="none" stroke="#5d616b" stroke-width="1.12"><circle cx="7.5" cy="7.5" r="6.05"/><path d="M7.5 6.8v3.7" stroke-width="1.45"/><circle cx="7.5" cy="4.65" r=".55" fill="#5d616b" stroke-width=".6"/></svg>
<span style="left:959.7px;top:8px;font-size:13.1px;letter-spacing:0.03px;color:#6a6d75;">€0.00</span>
<svg class="" style="left:1081px;top:10px" width="16" height="16" viewBox="-0.4 -0.4 16 16" fill="none" stroke="#5d616b" stroke-width="1.12"><circle cx="7.5" cy="7.5" r="6.05"/><path d="M7.5 6.8v3.7" stroke-width="1.45"/><circle cx="7.5" cy="4.65" r=".55" fill="#5d616b" stroke-width=".6"/></svg>
<span style="left:1109.7px;top:8px;font-size:13.1px;letter-spacing:0.02px;color:#6a6d75;">€0.00</span>
<svg class="" style="left:1231px;top:10px" width="16" height="16" viewBox="-0.4 -0.4 16 16" fill="none" stroke="#5d616b" stroke-width="1.12"><circle cx="7.5" cy="7.5" r="6.05"/><path d="M7.5 6.8v3.7" stroke-width="1.45"/><circle cx="7.5" cy="4.65" r=".55" fill="#5d616b" stroke-width=".6"/></svg>
<span style="left:1259.7px;top:8px;font-size:13.1px;letter-spacing:0.02px;color:#6a6d75;">€0.00</span>
<span style="left:1377.5px;top:4px;font-size:13.1px;letter-spacing:0.07px;color:#6a6d75;">€0.00</span>
</div>
<div class="r" style="top:196px;background:#fafbfd">
<i class="cb"></i><i class="lp"></i>
<span style="left:72.3px;top:4px;font-size:12.7px;letter-spacing:-0.06px;color:#6a6d75;">Product16</span>
<span style="left:334.7px;top:3px;font-size:14.3px;letter-spacing:-0.43px;color:#1a80a8;">Edit</span>
<svg class="" style="left:481px;top:4px" width="16" height="16" viewBox="-0.3 -0.3 16 16" fill="none" stroke="#5d616b" stroke-width="1.12"><circle cx="7.5" cy="7.5" r="6.05"/><path d="M7.5 6.8v3.7" stroke-width="1.45"/><circle cx="7.5" cy="4.65" r=".55" fill="#5d616b" stroke-width=".6"/></svg>
<span style="left:509.7px;top:2px;font-size:13.1px;letter-spacing:-0.02px;color:#6a6d75;">€0.00</span>
<svg style="left:603px;top:9px" width="9" height="7" viewBox="-0.3 -0.3 9 7" fill="none" stroke="#5c6069" stroke-width="1.05" stroke-linecap="round" stroke-linejoin="round"><path d="M.9 1.1L4 4.2 7.1 1.1"/></svg>
<svg class="" style="left:631px;top:10px" width="16" height="16" viewBox="-0.4 -0.4 16 16" fill="none" stroke="#5d616b" stroke-width="1.12"><circle cx="7.5" cy="7.5" r="6.05"/><path d="M7.5 6.8v3.7" stroke-width="1.45"/><circle cx="7.5" cy="4.65" r=".55" fill="#5d616b" stroke-width=".6"/></svg>
<span style="left:659.7px;top:8px;font-size:13.1px;letter-spacing:0.03px;color:#6a6d75;">€0.00</span>
<svg class="" style="left:781px;top:10px" width="16" height="16" viewBox="-0.4 -0.4 16 16" fill="none" stroke="#5d616b" stroke-width="1.12"><circle cx="7.5" cy="7.5" r="6.05"/><path d="M7.5 6.8v3.7" stroke-width="1.45"/><circle cx="7.5" cy="4.65" r=".55" fill="#5d616b" stroke-width=".6"/></svg>
<svg class="" style="left:931px;top:10px" width="16" height="16" viewBox="-0.4 -0.4 16 16" fill="none" stroke="#5d616b" stroke-width="1.12"><circle cx="7.5" cy="7.5" r="6.05"/><path d="M7.5 6.8v3.7" stroke-width="1.45"/><circle cx="7.5" cy="4.65" r=".55" fill="#5d616b" stroke-width=".6"/></svg>
<span style="left:959.7px;top:8px;font-size:13.1px;letter-spacing:0.03px;color:#6a6d75;">€0.00</span>
<svg class="" style="left:1081px;top:10px" width="16" height="16" viewBox="-0.4 -0.4 16 16" fill="none" stroke="#5d616b" stroke-width="1.12"><circle cx="7.5" cy="7.5" r="6.05"/><path d="M7.5 6.8v3.7" stroke-width="1.45"/><circle cx="7.5" cy="4.65" r=".55" fill="#5d616b" stroke-width=".6"/></svg>
<span style="left:1109.7px;top:8px;font-size:13.1px;letter-spacing:0.02px;color:#6a6d75;">€0.00</span>
<svg class="" style="left:1231px;top:10px" width="16" height="16" viewBox="-0.4 -0.4 16 16" fill="none" stroke="#5d616b" stroke-width="1.12"><circle cx="7.5" cy="7.5" r="6.05"/><path d="M7.5 6.8v3.7" stroke-width="1.45"/><circle cx="7.5" cy="4.65" r=".55" fill="#5d616b" stroke-width=".6"/></svg>
<span style="left:1259.7px;top:8px;font-size:13.1px;letter-spacing:0.02px;color:#6a6d75;">€0.00</span>
<span style="left:1377.5px;top:4px;font-size:13.1px;letter-spacing:0.07px;color:#6a6d75;">€0.00</span>
</div>
<div class="r" style="top:224px;background:#fff">
<i class="cb"></i><i class="lp"></i>
<span style="left:72.3px;top:4px;font-size:12.7px;letter-spacing:-0.06px;color:#6a6d75;">Product17</span>
<span style="left:334.7px;top:3px;font-size:14.3px;letter-spacing:-0.43px;color:#1a80a8;">Edit</span>
<svg class="" style="left:481px;top:4px" width="16" height="16" viewBox="-0.3 -0.3 16 16" fill="none" stroke="#5d616b" stroke-width="1.12"><circle cx="7.5" cy="7.5" r="6.05"/><path d="M7.5 6.8v3.7" stroke-width="1.45"/><circle cx="7.5" cy="4.65" r=".55" fill="#5d616b" stroke-width=".6"/></svg>
<span style="left:509.7px;top:2px;font-size:13.1px;letter-spacing:-0.02px;color:#6a6d75;">€0.00</span>
<svg style="left:603px;top:9px" width="9" height="7" viewBox="-0.3 -0.3 9 7" fill="none" stroke="#5c6069" stroke-width="1.05" stroke-linecap="round" stroke-linejoin="round"><path d="M.9 1.1L4 4.2 7.1 1.1"/></svg>
<svg class="" style="left:631px;top:10px" width="16" height="16" viewBox="-0.4 -0.4 16 16" fill="none" stroke="#5d616b" stroke-width="1.12"><circle cx="7.5" cy="7.5" r="6.05"/><path d="M7.5 6.8v3.7" stroke-width="1.45"/><circle cx="7.5" cy="4.65" r=".55" fill="#5d616b" stroke-width=".6"/></svg>
<span style="left:659.7px;top:8px;font-size:13.1px;letter-spacing:0.03px;color:#6a6d75;">€0.00</span>
<svg class="" style="left:781px;top:10px" width="16" height="16" viewBox="-0.4 -0.4 16 16" fill="none" stroke="#5d616b" stroke-width="1.12"><circle cx="7.5" cy="7.5" r="6.05"/><path d="M7.5 6.8v3.7" stroke-width="1.45"/><circle cx="7.5" cy="4.65" r=".55" fill="#5d616b" stroke-width=".6"/></svg>
<svg class="" style="left:931px;top:10px" width="16" height="16" viewBox="-0.4 -0.4 16 16" fill="none" stroke="#5d616b" stroke-width="1.12"><circle cx="7.5" cy="7.5" r="6.05"/><path d="M7.5 6.8v3.7" stroke-width="1.45"/><circle cx="7.5" cy="4.65" r=".55" fill="#5d616b" stroke-width=".6"/></svg>
<span style="left:959.7px;top:8px;font-size:13.1px;letter-spacing:0.03px;color:#6a6d75;">€0.00</span>
<svg class="" style="left:1081px;top:10px" width="16" height="16" viewBox="-0.4 -0.4 16 16" fill="none" stroke="#5d616b" stroke-width="1.12"><circle cx="7.5" cy="7.5" r="6.05"/><path d="M7.5 6.8v3.7" stroke-width="1.45"/><circle cx="7.5" cy="4.65" r=".55" fill="#5d616b" stroke-width=".6"/></svg>
<span style="left:1109.7px;top:8px;font-size:13.1px;letter-spacing:0.02px;color:#6a6d75;">€0.00</span>
<svg class="" style="left:1231px;top:10px" width="16" height="16" viewBox="-0.4 -0.4 16 16" fill="none" stroke="#5d616b" stroke-width="1.12"><circle cx="7.5" cy="7.5" r="6.05"/><path d="M7.5 6.8v3.7" stroke-width="1.45"/><circle cx="7.5" cy="4.65" r=".55" fill="#5d616b" stroke-width=".6"/></svg>
<span style="left:1259.7px;top:8px;font-size:13.1px;letter-spacing:0.02px;color:#6a6d75;">€0.00</span>
<span style="left:1377.5px;top:4px;font-size:13.1px;letter-spacing:0.07px;color:#6a6d75;">€0.00</span>
</div>
<div class="r" style="top:252px;background:#fafbfd">
<i class="cb"></i><i class="lp"></i>
<span style="left:72.3px;top:4px;font-size:12.7px;letter-spacing:-0.06px;color:#6a6d75;">Product18</span>
<span style="left:334.7px;top:3px;font-size:14.3px;letter-spacing:-0.43px;color:#1a80a8;">Edit</span>
<svg class="" style="left:481px;top:4px" width="16" height="16" viewBox="-0.3 -0.3 16 16" fill="none" stroke="#5d616b" stroke-width="1.12"><circle cx="7.5" cy="7.5" r="6.05"/><path d="M7.5 6.8v3.7" stroke-width="1.45"/><circle cx="7.5" cy="4.65" r=".55" fill="#5d616b" stroke-width=".6"/></svg>
<span style="left:509.7px;top:2px;font-size:13.1px;letter-spacing:-0.02px;color:#6a6d75;">€0.00</span>
<svg style="left:603px;top:9px" width="9" height="7" viewBox="-0.3 -0.3 9 7" fill="none" stroke="#5c6069" stroke-width="1.05" stroke-linecap="round" stroke-linejoin="round"><path d="M.9 1.1L4 4.2 7.1 1.1"/></svg>
<svg class="" style="left:631px;top:10px" width="16" height="16" viewBox="-0.4 -0.4 16 16" fill="none" stroke="#5d616b" stroke-width="1.12"><circle cx="7.5" cy="7.5" r="6.05"/><path d="M7.5 6.8v3.7" stroke-width="1.45"/><circle cx="7.5" cy="4.65" r=".55" fill="#5d616b" stroke-width=".6"/></svg>
<span style="left:659.7px;top:8px;font-size:13.1px;letter-spacing:0.03px;color:#6a6d75;">€0.00</span>
<svg class="" style="left:781px;top:10px" width="16" height="16" viewBox="-0.4 -0.4 16 16" fill="none" stroke="#5d616b" stroke-width="1.12"><circle cx="7.5" cy="7.5" r="6.05"/><path d="M7.5 6.8v3.7" stroke-width="1.45"/><circle cx="7.5" cy="4.65" r=".55" fill="#5d616b" stroke-width=".6"/></svg>
<svg class="" style="left:931px;top:10px" width="16" height="16" viewBox="-0.4 -0.4 16 16" fill="none" stroke="#5d616b" stroke-width="1.12"><circle cx="7.5" cy="7.5" r="6.05"/><path d="M7.5 6.8v3.7" stroke-width="1.45"/><circle cx="7.5" cy="4.65" r=".55" fill="#5d616b" stroke-width=".6"/></svg>
<span style="left:959.7px;top:8px;font-size:13.1px;letter-spacing:0.03px;color:#6a6d75;">€0.00</span>
<svg class="" style="left:1081px;top:10px" width="16" height="16" viewBox="-0.4 -0.4 16 16" fill="none" stroke="#5d616b" stroke-width="1.12"><circle cx="7.5" cy="7.5" r="6.05"/><path d="M7.5 6.8v3.7" stroke-width="1.45"/><circle cx="7.5" cy="4.65" r=".55" fill="#5d616b" stroke-width=".6"/></svg>
<span style="left:1109.7px;top:8px;font-size:13.1px;letter-spacing:0.02px;color:#6a6d75;">€0.00</span>
<svg class="" style="left:1231px;top:10px" width="16" height="16" viewBox="-0.4 -0.4 16 16" fill="none" stroke="#5d616b" stroke-width="1.12"><circle cx="7.5" cy="7.5" r="6.05"/><path d="M7.5 6.8v3.7" stroke-width="1.45"/><circle cx="7.5" cy="4.65" r=".55" fill="#5d616b" stroke-width=".6"/></svg>
<span style="left:1259.7px;top:8px;font-size:13.1px;letter-spacing:0.02px;color:#6a6d75;">€0.00</span>
<span style="left:1377.5px;top:4px;font-size:13.1px;letter-spacing:0.07px;color:#6a6d75;">€0.00</span>
</div>
<div class="r" style="top:280px;background:#fff">
<i class="cb"></i><i class="lp"></i>
<span style="left:72.3px;top:4px;font-size:12.7px;letter-spacing:-0.06px;color:#6a6d75;">Product19</span>
<span style="left:334.7px;top:3px;font-size:14.3px;letter-spacing:-0.43px;color:#1a80a8;">Edit</span>
<svg class="" style="left:481px;top:4px" width="16" height="16" viewBox="-0.3 -0.3 16 16" fill="none" stroke="#5d616b" stroke-width="1.12"><circle cx="7.5" cy="7.5" r="6.05"/><path d="M7.5 6.8v3.7" stroke-width="1.45"/><circle cx="7.5" cy="4.65" r=".55" fill="#5d616b" stroke-width=".6"/></svg>
<span style="left:509.7px;top:2px;font-size:13.1px;letter-spacing:-0.02px;color:#6a6d75;">€0.00</span>
<svg style="left:603px;top:9px" width="9" height="7" viewBox="-0.3 -0.3 9 7" fill="none" stroke="#5c6069" stroke-width="1.05" stroke-linecap="round" stroke-linejoin="round"><path d="M.9 1.1L4 4.2 7.1 1.1"/></svg>
<svg class="" style="left:631px;top:10px" width="16" height="16" viewBox="-0.4 -0.4 16 16" fill="none" stroke="#5d616b" stroke-width="1.12"><circle cx="7.5" cy="7.5" r="6.05"/><path d="M7.5 6.8v3.7" stroke-width="1.45"/><circle cx="7.5" cy="4.65" r=".55" fill="#5d616b" stroke-width=".6"/></svg>
<span style="left:659.7px;top:8px;font-size:13.1px;letter-spacing:0.03px;color:#6a6d75;">€0.00</span>
<svg class="" style="left:781px;top:10px" width="16" height="16" viewBox="-0.4 -0.4 16 16" fill="none" stroke="#5d616b" stroke-width="1.12"><circle cx="7.5" cy="7.5" r="6.05"/><path d="M7.5 6.8v3.7" stroke-width="1.45"/><circle cx="7.5" cy="4.65" r=".55" fill="#5d616b" stroke-width=".6"/></svg>
<svg class="" style="left:931px;top:10px" width="16" height="16" viewBox="-0.4 -0.4 16 16" fill="none" stroke="#5d616b" stroke-width="1.12"><circle cx="7.5" cy="7.5" r="6.05"/><path d="M7.5 6.8v3.7" stroke-width="1.45"/><circle cx="7.5" cy="4.65" r=".55" fill="#5d616b" stroke-width=".6"/></svg>
<span style="left:959.7px;top:8px;font-size:13.1px;letter-spacing:0.03px;color:#6a6d75;">€0.00</span>
<svg class="" style="left:1081px;top:10px" width="16" height="16" viewBox="-0.4 -0.4 16 16" fill="none" stroke="#5d616b" stroke-width="1.12"><circle cx="7.5" cy="7.5" r="6.05"/><path d="M7.5 6.8v3.7" stroke-width="1.45"/><circle cx="7.5" cy="4.65" r=".55" fill="#5d616b" stroke-width=".6"/></svg>
<span style="left:1109.7px;top:8px;font-size:13.1px;letter-spacing:0.02px;color:#6a6d75;">€0.00</span>
<svg class="" style="left:1231px;top:10px" width="16" height="16" viewBox="-0.4 -0.4 16 16" fill="none" stroke="#5d616b" stroke-width="1.12"><circle cx="7.5" cy="7.5" r="6.05"/><path d="M7.5 6.8v3.7" stroke-width="1.45"/><circle cx="7.5" cy="4.65" r=".55" fill="#5d616b" stroke-width=".6"/></svg>
<span style="left:1259.7px;top:8px;font-size:13.1px;letter-spacing:0.02px;color:#6a6d75;">€0.00</span>
<span style="left:1377.5px;top:4px;font-size:13.1px;letter-spacing:0.07px;color:#6a6d75;">€0.00</span>
</div>
<div class="r" style="top:308px;background:#fafbfd">
<i class="cb"></i><i class="lp"></i>
<span style="left:72.3px;top:4px;font-size:12.6px;color:#6a6d75;">Product100</span>
<span style="left:334.7px;top:3px;font-size:14.3px;letter-spacing:-0.43px;color:#1a80a8;">Edit</span>
<svg class="" style="left:481px;top:4px" width="16" height="16" viewBox="-0.3 -0.3 16 16" fill="none" stroke="#5d616b" stroke-width="1.12"><circle cx="7.5" cy="7.5" r="6.05"/><path d="M7.5 6.8v3.7" stroke-width="1.45"/><circle cx="7.5" cy="4.65" r=".55" fill="#5d616b" stroke-width=".6"/></svg>
<span style="left:509.7px;top:2px;font-size:13.1px;letter-spacing:-0.02px;color:#6a6d75;">€0.00</span>
<svg style="left:603px;top:9px" width="9" height="7" viewBox="-0.3 -0.3 9 7" fill="none" stroke="#5c6069" stroke-width="1.05" stroke-linecap="round" stroke-linejoin="round"><path d="M.9 1.1L4 4.2 7.1 1.1"/></svg>
<svg class="" style="left:631px;top:10px" width="16" height="16" viewBox="-0.4 -0.4 16 16" fill="none" stroke="#5d616b" stroke-width="1.12"><circle cx="7.5" cy="7.5" r="6.05"/><path d="M7.5 6.8v3.7" stroke-width="1.45"/><circle cx="7.5" cy="4.65" r=".55" fill="#5d616b" stroke-width=".6"/></svg>
<span style="left:659.7px;top:8px;font-size:13.1px;letter-spacing:0.03px;color:#6a6d75;">€0.00</span>
<svg class="" style="left:781px;top:10px" width="16" height="16" viewBox="-0.4 -0.4 16 16" fill="none" stroke="#5d616b" stroke-width="1.12"><circle cx="7.5" cy="7.5" r="6.05"/><path d="M7.5 6.8v3.7" stroke-width="1.45"/><circle cx="7.5" cy="4.65" r=".55" fill="#5d616b" stroke-width=".6"/></svg>
<svg class="" style="left:931px;top:10px" width="16" height="16" viewBox="-0.4 -0.4 16 16" fill="none" stroke="#5d616b" stroke-width="1.12"><circle cx="7.5" cy="7.5" r="6.05"/><path d="M7.5 6.8v3.7" stroke-width="1.45"/><circle cx="7.5" cy="4.65" r=".55" fill="#5d616b" stroke-width=".6"/></svg>
<span style="left:959.7px;top:8px;font-size:13.1px;letter-spacing:0.03px;color:#6a6d75;">€0.00</span>
<svg class="" style="left:1081px;top:10px" width="16" height="16" viewBox="-0.4 -0.4 16 16" fill="none" stroke="#5d616b" stroke-width="1.12"><circle cx="7.5" cy="7.5" r="6.05"/><path d="M7.5 6.8v3.7" stroke-width="1.45"/><circle cx="7.5" cy="4.65" r=".55" fill="#5d616b" stroke-width=".6"/></svg>
<span style="left:1109.7px;top:8px;font-size:13.1px;letter-spacing:0.02px;color:#6a6d75;">€0.00</span>
<svg class="" style="left:1231px;top:10px" width="16" height="16" viewBox="-0.4 -0.4 16 16" fill="none" stroke="#5d616b" stroke-width="1.12"><circle cx="7.5" cy="7.5" r="6.05"/><path d="M7.5 6.8v3.7" stroke-width="1.45"/><circle cx="7.5" cy="4.65" r=".55" fill="#5d616b" stroke-width=".6"/></svg>
<span style="left:1259.7px;top:8px;font-size:13.1px;letter-spacing:0.02px;color:#6a6d75;">€0.00</span>
<span style="left:1377.5px;top:4px;font-size:13.1px;letter-spacing:0.07px;color:#6a6d75;">€0.00</span>
</div>
<div class="r" style="top:336px;background:#fff">
<i class="cb"></i><i class="lp"></i>
<span style="left:72.3px;top:4px;font-size:12.3px;letter-spacing:-0.01px;color:#6a6d75;">Product101</span>
<span style="left:334.7px;top:3px;font-size:14.3px;letter-spacing:-0.43px;color:#1a80a8;">Edit</span>
<svg class="" style="left:481px;top:4px" width="16" height="16" viewBox="-0.3 -0.3 16 16" fill="none" stroke="#5d616b" stroke-width="1.12"><circle cx="7.5" cy="7.5" r="6.05"/><path d="M7.5 6.8v3.7" stroke-width="1.45"/><circle cx="7.5" cy="4.65" r=".55" fill="#5d616b" stroke-width=".6"/></svg>
<span style="left:509.7px;top:2px;font-size:13.1px;letter-spacing:-0.02px;color:#6a6d75;">€0.00</span>
<svg style="left:603px;top:9px" width="9" height="7" viewBox="-0.3 -0.3 9 7" fill="none" stroke="#5c6069" stroke-width="1.05" stroke-linecap="round" stroke-linejoin="round"><path d="M.9 1.1L4 4.2 7.1 1.1"/></svg>
<svg class="" style="left:631px;top:10px" width="16" height="16" viewBox="-0.4 -0.4 16 16" fill="none" stroke="#5d616b" stroke-width="1.12"><circle cx="7.5" cy="7.5" r="6.05"/><path d="M7.5 6.8v3.7" stroke-width="1.45"/><circle cx="7.5" cy="4.65" r=".55" fill="#5d616b" stroke-width=".6"/></svg>
<span style="left:659.7px;top:8px;font-size:13.1px;letter-spacing:0.03px;color:#6a6d75;">€0.00</span>
<svg class="" style="left:781px;top:10px" width="16" height="16" viewBox="-0.4 -0.4 16 16" fill="none" stroke="#5d616b" stroke-width="1.12"><circle cx="7.5" cy="7.5" r="6.05"/><path d="M7.5 6.8v3.7" stroke-width="1.45"/><circle cx="7.5" cy="4.65" r=".55" fill="#5d616b" stroke-width=".6"/></svg>
<svg class="" style="left:931px;top:10px" width="16" height="16" viewBox="-0.4 -0.4 16 16" fill="none" stroke="#5d616b" stroke-width="1.12"><circle cx="7.5" cy="7.5" r="6.05"/><path d="M7.5 6.8v3.7" stroke-width="1.45"/><circle cx="7.5" cy="4.65" r=".55" fill="#5d616b" stroke-width=".6"/></svg>
<span style="left:959.7px;top:8px;font-size:13.1px;letter-spacing:0.03px;color:#6a6d75;">€0.00</span>
<svg class="" style="left:1081px;top:10px" width="16" height="16" viewBox="-0.4 -0.4 16 16" fill="none" stroke="#5d616b" stroke-width="1.12"><circle cx="7.5" cy="7.5" r="6.05"/><path d="M7.5 6.8v3.7" stroke-width="1.45"/><circle cx="7.5" cy="4.65" r=".55" fill="#5d616b" stroke-width=".6"/></svg>
<span style="left:1109.7px;top:8px;font-size:13.1px;letter-spacing:0.02px;color:#6a6d75;">€0.00</span>
<svg class="" style="left:1231px;top:10px" width="16" height="16" viewBox="-0.4 -0.4 16 16" fill="none" stroke="#5d616b" stroke-width="1.12"><circle cx="7.5" cy="7.5" r="6.05"/><path d="M7.5 6.8v3.7" stroke-width="1.45"/><circle cx="7.5" cy="4.65" r=".55" fill="#5d616b" stroke-width=".6"/></svg>
<span style="left:1259.7px;top:8px;font-size:13.1px;letter-spacing:0.02px;color:#6a6d75;">€0.00</span>
<span style="left:1377.5px;top:4px;font-size:13.1px;letter-spacing:0.07px;color:#6a6d75;">€0.00</span>
</div>
<div class="r" style="top:364px;background:#fafbfd">
<i class="cb"></i><i class="lp"></i>
<span style="left:72.3px;top:4px;font-size:12.7px;letter-spacing:-0.01px;color:#6a6d75;">Product102</span>
<span style="left:334.7px;top:3px;font-size:14.3px;letter-spacing:-0.43px;color:#1a80a8;">Edit</span>
<svg class="" style="left:481px;top:4px" width="16" height="16" viewBox="-0.3 -0.3 16 16" fill="none" stroke="#5d616b" stroke-width="1.12"><circle cx="7.5" cy="7.5" r="6.05"/><path d="M7.5 6.8v3.7" stroke-width="1.45"/><circle cx="7.5" cy="4.65" r=".55" fill="#5d616b" stroke-width=".6"/></svg>
<span style="left:509.7px;top:2px;font-size:13.1px;letter-spacing:-0.02px;color:#6a6d75;">€0.00</span>
<svg style="left:603px;top:9px" width="9" height="7" viewBox="-0.3 -0.3 9 7" fill="none" stroke="#5c6069" stroke-width="1.05" stroke-linecap="round" stroke-linejoin="round"><path d="M.9 1.1L4 4.2 7.1 1.1"/></svg>
<svg class="" style="left:631px;top:10px" width="16" height="16" viewBox="-0.4 -0.4 16 16" fill="none" stroke="#5d616b" stroke-width="1.12"><circle cx="7.5" cy="7.5" r="6.05"/><path d="M7.5 6.8v3.7" stroke-width="1.45"/><circle cx="7.5" cy="4.65" r=".55" fill="#5d616b" stroke-width=".6"/></svg>
<span style="left:659.7px;top:8px;font-size:13.1px;letter-spacing:0.03px;color:#6a6d75;">€0.00</span>
<svg class="" style="left:781px;top:10px" width="16" height="16" viewBox="-0.4 -0.4 16 16" fill="none" stroke="#5d616b" stroke-width="1.12"><circle cx="7.5" cy="7.5" r="6.05"/><path d="M7.5 6.8v3.7" stroke-width="1.45"/><circle cx="7.5" cy="4.65" r=".55" fill="#5d616b" stroke-width=".6"/></svg>
<svg class="" style="left:931px;top:10px" width="16" height="16" viewBox="-0.4 -0.4 16 16" fill="none" stroke="#5d616b" stroke-width="1.12"><circle cx="7.5" cy="7.5" r="6.05"/><path d="M7.5 6.8v3.7" stroke-width="1.45"/><circle cx="7.5" cy="4.65" r=".55" fill="#5d616b" stroke-width=".6"/></svg>
<span style="left:959.7px;top:8px;font-size:13.1px;letter-spacing:0.03px;color:#6a6d75;">€0.00</span>
<svg class="" style="left:1081px;top:10px" width="16" height="16" viewBox="-0.4 -0.4 16 16" fill="none" stroke="#5d616b" stroke-width="1.12"><circle cx="7.5" cy="7.5" r="6.05"/><path d="M7.5 6.8v3.7" stroke-width="1.45"/><circle cx="7.5" cy="4.65" r=".55" fill="#5d616b" stroke-width=".6"/></svg>
<span style="left:1109.7px;top:8px;font-size:13.1px;letter-spacing:0.02px;color:#6a6d75;">€0.00</span>
<svg class="" style="left:1231px;top:10px" width="16" height="16" viewBox="-0.4 -0.4 16 16" fill="none" stroke="#5d616b" stroke-width="1.12"><circle cx="7.5" cy="7.5" r="6.05"/><path d="M7.5 6.8v3.7" stroke-width="1.45"/><circle cx="7.5" cy="4.65" r=".55" fill="#5d616b" stroke-width=".6"/></svg>
<span style="left:1259.7px;top:8px;font-size:13.1px;letter-spacing:0.02px;color:#6a6d75;">€0.00</span>
<span style="left:1377.5px;top:4px;font-size:13.1px;letter-spacing:0.07px;color:#6a6d75;">€0.00</span>
</div>
<div class="r" style="top:392px;background:#fff">
<i class="cb"></i><i class="lp"></i>
<span style="left:72.3px;top:4px;font-size:12.7px;letter-spacing:-0.01px;color:#6a6d75;">Product103</span>
<span style="left:334.7px;top:3px;font-size:14.3px;letter-spacing:-0.43px;color:#1a80a8;">Edit</span>
<svg class="" style="left:481px;top:4px" width="16" height="16" viewBox="-0.3 -0.3 16 16" fill="none" stroke="#5d616b" stroke-width="1.12"><circle cx="7.5" cy="7.5" r="6.05"/><path d="M7.5 6.8v3.7" stroke-width="1.45"/><circle cx="7.5" cy="4.65" r=".55" fill="#5d616b" stroke-width=".6"/></svg>
<span style="left:509.7px;top:2px;font-size:13.1px;letter-spacing:-0.02px;color:#6a6d75;">€0.00</span>
<svg style="left:603px;top:9px" width="9" height="7" viewBox="-0.3 -0.3 9 7" fill="none" stroke="#5c6069" stroke-width="1.05" stroke-linecap="round" stroke-linejoin="round"><path d="M.9 1.1L4 4.2 7.1 1.1"/></svg>
<svg class="" style="left:631px;top:10px" width="16" height="16" viewBox="-0.4 -0.4 16 16" fill="none" stroke="#5d616b" stroke-width="1.12"><circle cx="7.5" cy="7.5" r="6.05"/><path d="M7.5 6.8v3.7" stroke-width="1.45"/><circle cx="7.5" cy="4.65" r=".55" fill="#5d616b" stroke-width=".6"/></svg>
<span style="left:659.7px;top:8px;font-size:13.1px;letter-spacing:0.03px;color:#6a6d75;">€0.00</span>
<svg class="" style="left:781px;top:10px" width="16" height="16" viewBox="-0.4 -0.4 16 16" fill="none" stroke="#5d616b" stroke-width="1.12"><circle cx="7.5" cy="7.5" r="6.05"/><path d="M7.5 6.8v3.7" stroke-width="1.45"/><circle cx="7.5" cy="4.65" r=".55" fill="#5d616b" stroke-width=".6"/></svg>
<svg class="" style="left:931px;top:10px" width="16" height="16" viewBox="-0.4 -0.4 16 16" fill="none" stroke="#5d616b" stroke-width="1.12"><circle cx="7.5" cy="7.5" r="6.05"/><path d="M7.5 6.8v3.7" stroke-width="1.45"/><circle cx="7.5" cy="4.65" r=".55" fill="#5d616b" stroke-width=".6"/></svg>
<span style="left:959.7px;top:8px;font-size:13.1px;letter-spacing:0.03px;color:#6a6d75;">€0.00</span>
<svg class="" style="left:1081px;top:10px" width="16" height="16" viewBox="-0.4 -0.4 16 16" fill="none" stroke="#5d616b" stroke-width="1.12"><circle cx="7.5" cy="7.5" r="6.05"/><path d="M7.5 6.8v3.7" stroke-width="1.45"/><circle cx="7.5" cy="4.65" r=".55" fill="#5d616b" stroke-width=".6"/></svg>
<span style="left:1109.7px;top:8px;font-size:13.1px;letter-spacing:0.02px;color:#6a6d75;">€0.00</span>
<svg class="" style="left:1231px;top:10px" width="16" height="16" viewBox="-0.4 -0.4 16 16" fill="none" stroke="#5d616b" stroke-width="1.12"><circle cx="7.5" cy="7.5" r="6.05"/><path d="M7.5 6.8v3.7" stroke-width="1.45"/><circle cx="7.5" cy="4.65" r=".55" fill="#5d616b" stroke-width=".6"/></svg>
<span style="left:1259.7px;top:8px;font-size:13.1px;letter-spacing:0.02px;color:#6a6d75;">€0.00</span>
<span style="left:1377.5px;top:4px;font-size:13.1px;letter-spacing:0.07px;color:#6a6d75;">€0.00</span>
</div>
<div class="r" style="top:420px;background:#fafbfd">
<i class="cb"></i><i class="lp"></i>
<span style="left:72.3px;top:4px;font-size:12.6px;letter-spacing:-0.01px;color:#6a6d75;">Product104</span>
<span style="left:334.7px;top:3px;font-size:14.3px;letter-spacing:-0.43px;color:#1a80a8;">Edit</span>
<svg class="" style="left:481px;top:4px" width="16" height="16" viewBox="-0.3 -0.3 16 16" fill="none" stroke="#5d616b" stroke-width="1.12"><circle cx="7.5" cy="7.5" r="6.05"/><path d="M7.5 6.8v3.7" stroke-width="1.45"/><circle cx="7.5" cy="4.65" r=".55" fill="#5d616b" stroke-width=".6"/></svg>
<span style="left:509.7px;top:2px;font-size:13.1px;letter-spacing:-0.02px;color:#6a6d75;">€0.00</span>
<svg style="left:603px;top:9px" width="9" height="7" viewBox="-0.3 -0.3 9 7" fill="none" stroke="#5c6069" stroke-width="1.05" stroke-linecap="round" stroke-linejoin="round"><path d="M.9 1.1L4 4.2 7.1 1.1"/></svg>
<svg class="" style="left:631px;top:10px" width="16" height="16" viewBox="-0.4 -0.4 16 16" fill="none" stroke="#5d616b" stroke-width="1.12"><circle cx="7.5" cy="7.5" r="6.05"/><path d="M7.5 6.8v3.7" stroke-width="1.45"/><circle cx="7.5" cy="4.65" r=".55" fill="#5d616b" stroke-width=".6"/></svg>
<span style="left:659.7px;top:8px;font-size:13.1px;letter-spacing:0.03px;color:#6a6d75;">€0.00</span>
<svg class="" style="left:781px;top:10px" width="16" height="16" viewBox="-0.4 -0.4 16 16" fill="none" stroke="#5d616b" stroke-width="1.12"><circle cx="7.5" cy="7.5" r="6.05"/><path d="M7.5 6.8v3.7" stroke-width="1.45"/><circle cx="7.5" cy="4.65" r=".55" fill="#5d616b" stroke-width=".6"/></svg>
<svg class="" style="left:931px;top:10px" width="16" height="16" viewBox="-0.4 -0.4 16 16" fill="none" stroke="#5d616b" stroke-width="1.12"><circle cx="7.5" cy="7.5" r="6.05"/><path d="M7.5 6.8v3.7" stroke-width="1.45"/><circle cx="7.5" cy="4.65" r=".55" fill="#5d616b" stroke-width=".6"/></svg>
<span style="left:959.7px;top:8px;font-size:13.1px;letter-spacing:0.03px;color:#6a6d75;">€0.00</span>
<svg class="" style="left:1081px;top:10px" width="16" height="16" viewBox="-0.4 -0.4 16 16" fill="none" stroke="#5d616b" stroke-width="1.12"><circle cx="7.5" cy="7.5" r="6.05"/><path d="M7.5 6.8v3.7" stroke-width="1.45"/><circle cx="7.5" cy="4.65" r=".55" fill="#5d616b" stroke-width=".6"/></svg>
<span style="left:1109.7px;top:8px;font-size:13.1px;letter-spacing:0.02px;color:#6a6d75;">€0.00</span>
<svg class="" style="left:1231px;top:10px" width="16" height="16" viewBox="-0.4 -0.4 16 16" fill="none" stroke="#5d616b" stroke-width="1.12"><circle cx="7.5" cy="7.5" r="6.05"/><path d="M7.5 6.8v3.7" stroke-width="1.45"/><circle cx="7.5" cy="4.65" r=".55" fill="#5d616b" stroke-width=".6"/></svg>
<span style="left:1259.7px;top:8px;font-size:13.1px;letter-spacing:0.02px;color:#6a6d75;">€0.00</span>
<span style="left:1377.5px;top:4px;font-size:13.1px;letter-spacing:0.07px;color:#6a6d75;">€0.00</span>
</div>
<div class="r" style="top:448px;background:#fff">
<i class="cb"></i><i class="lp"></i>
<span style="left:72.3px;top:4px;font-size:12.7px;letter-spacing:-0.01px;color:#6a6d75;">Product105</span>
<span style="left:334.7px;top:3px;font-size:14.3px;letter-spacing:-0.43px;color:#1a80a8;">Edit</span>
<svg class="" style="left:481px;top:4px" width="16" height="16" viewBox="-0.3 -0.3 16 16" fill="none" stroke="#5d616b" stroke-width="1.12"><circle cx="7.5" cy="7.5" r="6.05"/><path d="M7.5 6.8v3.7" stroke-width="1.45"/><circle cx="7.5" cy="4.65" r=".55" fill="#5d616b" stroke-width=".6"/></svg>
<span style="left:509.7px;top:2px;font-size:13.1px;letter-spacing:-0.02px;color:#6a6d75;">€0.00</span>
<svg style="left:603px;top:9px" width="9" height="7" viewBox="-0.3 -0.3 9 7" fill="none" stroke="#5c6069" stroke-width="1.05" stroke-linecap="round" stroke-linejoin="round"><path d="M.9 1.1L4 4.2 7.1 1.1"/></svg>
<svg class="" style="left:631px;top:10px" width="16" height="16" viewBox="-0.4 -0.4 16 16" fill="none" stroke="#5d616b" stroke-width="1.12"><circle cx="7.5" cy="7.5" r="6.05"/><path d="M7.5 6.8v3.7" stroke-width="1.45"/><circle cx="7.5" cy="4.65" r=".55" fill="#5d616b" stroke-width=".6"/></svg>
<span style="left:659.7px;top:8px;font-size:13.1px;letter-spacing:0.03px;color:#6a6d75;">€0.00</span>
<svg class="" style="left:781px;top:10px" width="16" height="16" viewBox="-0.4 -0.4 16 16" fill="none" stroke="#5d616b" stroke-width="1.12"><circle cx="7.5" cy="7.5" r="6.05"/><path d="M7.5 6.8v3.7" stroke-width="1.45"/><circle cx="7.5" cy="4.65" r=".55" fill="#5d616b" stroke-width=".6"/></svg>
<svg class="" style="left:931px;top:10px" width="16" height="16" viewBox="-0.4 -0.4 16 16" fill="none" stroke="#5d616b" stroke-width="1.12"><circle cx="7.5" cy="7.5" r="6.05"/><path d="M7.5 6.8v3.7" stroke-width="1.45"/><circle cx="7.5" cy="4.65" r=".55" fill="#5d616b" stroke-width=".6"/></svg>
<span style="left:959.7px;top:8px;font-size:13.1px;letter-spacing:0.03px;color:#6a6d75;">€0.00</span>
<svg class="" style="left:1081px;top:10px" width="16" height="16" viewBox="-0.4 -0.4 16 16" fill="none" stroke="#5d616b" stroke-width="1.12"><circle cx="7.5" cy="7.5" r="6.05"/><path d="M7.5 6.8v3.7" stroke-width="1.45"/><circle cx="7.5" cy="4.65" r=".55" fill="#5d616b" stroke-width=".6"/></svg>
<span style="left:1109.7px;top:8px;font-size:13.1px;letter-spacing:0.02px;color:#6a6d75;">€0.00</span>
<svg class="" style="left:1231px;top:10px" width="16" height="16" viewBox="-0.4 -0.4 16 16" fill="none" stroke="#5d616b" stroke-width="1.12"><circle cx="7.5" cy="7.5" r="6.05"/><path d="M7.5 6.8v3.7" stroke-width="1.45"/><circle cx="7.5" cy="4.65" r=".55" fill="#5d616b" stroke-width=".6"/></svg>
<span style="left:1259.7px;top:8px;font-size:13.1px;letter-spacing:0.02px;color:#6a6d75;">€0.00</span>
<span style="left:1377.5px;top:4px;font-size:13.1px;letter-spacing:0.07px;color:#6a6d75;">€0.00</span>
</div>
<div class="r" style="top:476px;background:#fafbfd">
<i class="cb"></i><i class="lp"></i>
<span style="left:72.3px;top:4px;font-size:12.7px;letter-spacing:-0.01px;color:#6a6d75;">Product106</span>
<span style="left:334.7px;top:3px;font-size:14.3px;letter-spacing:-0.43px;color:#1a80a8;">Edit</span>
<svg class="" style="left:481px;top:4px" width="16" height="16" viewBox="-0.3 -0.3 16 16" fill="none" stroke="#5d616b" stroke-width="1.12"><circle cx="7.5" cy="7.5" r="6.05"/><path d="M7.5 6.8v3.7" stroke-width="1.45"/><circle cx="7.5" cy="4.65" r=".55" fill="#5d616b" stroke-width=".6"/></svg>
<span style="left:509.7px;top:2px;font-size:13.1px;letter-spacing:-0.02px;color:#6a6d75;">€0.00</span>
<svg style="left:603px;top:9px" width="9" height="7" viewBox="-0.3 -0.3 9 7" fill="none" stroke="#5c6069" stroke-width="1.05" stroke-linecap="round" stroke-linejoin="round"><path d="M.9 1.1L4 4.2 7.1 1.1"/></svg>
<svg class="" style="left:631px;top:10px" width="16" height="16" viewBox="-0.4 -0.4 16 16" fill="none" stroke="#5d616b" stroke-width="1.12"><circle cx="7.5" cy="7.5" r="6.05"/><path d="M7.5 6.8v3.7" stroke-width="1.45"/><circle cx="7.5" cy="4.65" r=".55" fill="#5d616b" stroke-width=".6"/></svg>
<span style="left:659.7px;top:8px;font-size:13.1px;letter-spacing:0.03px;color:#6a6d75;">€0.00</span>
<svg class="" style="left:781px;top:10px" width="16" height="16" viewBox="-0.4 -0.4 16 16" fill="none" stroke="#5d616b" stroke-width="1.12"><circle cx="7.5" cy="7.5" r="6.05"/><path d="M7.5 6.8v3.7" stroke-width="1.45"/><circle cx="7.5" cy="4.65" r=".55" fill="#5d616b" stroke-width=".6"/></svg>
<svg class="" style="left:931px;top:10px" width="16" height="16" viewBox="-0.4 -0.4 16 16" fill="none" stroke="#5d616b" stroke-width="1.12"><circle cx="7.5" cy="7.5" r="6.05"/><path d="M7.5 6.8v3.7" stroke-width="1.45"/><circle cx="7.5" cy="4.65" r=".55" fill="#5d616b" stroke-width=".6"/></svg>
<span style="left:959.7px;top:8px;font-size:13.1px;letter-spacing:0.03px;color:#6a6d75;">€0.00</span>
<svg class="" style="left:1081px;top:10px" width="16" height="16" viewBox="-0.4 -0.4 16 16" fill="none" stroke="#5d616b" stroke-width="1.12"><circle cx="7.5" cy="7.5" r="6.05"/><path d="M7.5 6.8v3.7" stroke-width="1.45"/><circle cx="7.5" cy="4.65" r=".55" fill="#5d616b" stroke-width=".6"/></svg>
<span style="left:1109.7px;top:8px;font-size:13.1px;letter-spacing:0.02px;color:#6a6d75;">€0.00</span>
<svg class="" style="left:1231px;top:10px" width="16" height="16" viewBox="-0.4 -0.4 16 16" fill="none" stroke="#5d616b" stroke-width="1.12"><circle cx="7.5" cy="7.5" r="6.05"/><path d="M7.5 6.8v3.7" stroke-width="1.45"/><circle cx="7.5" cy="4.65" r=".55" fill="#5d616b" stroke-width=".6"/></svg>
<span style="left:1259.7px;top:8px;font-size:13.1px;letter-spacing:0.02px;color:#6a6d75;">€0.00</span>
<span style="left:1377.5px;top:4px;font-size:13.1px;letter-spacing:0.07px;color:#6a6d75;">€0.00</span>
</div>
<div class="r" style="top:504px;background:#fff">
<i class="cb"></i><i class="lp"></i>
<span style="left:72.3px;top:4px;font-size:12.7px;letter-spacing:-0.01px;color:#6a6d75;">Product107</span>
<span style="left:334.7px;top:3px;font-size:14.3px;letter-spacing:-0.43px;color:#1a80a8;">Edit</span>
<svg class="" style="left:481px;top:4px" width="16" height="16" viewBox="-0.3 -0.3 16 16" fill="none" stroke="#5d616b" stroke-width="1.12"><circle cx="7.5" cy="7.5" r="6.05"/><path d="M7.5 6.8v3.7" stroke-width="1.45"/><circle cx="7.5" cy="4.65" r=".55" fill="#5d616b" stroke-width=".6"/></svg>
<span style="left:509.7px;top:2px;font-size:13.1px;letter-spacing:-0.02px;color:#6a6d75;">€0.00</span>
<svg style="left:603px;top:9px" width="9" height="7" viewBox="-0.3 -0.3 9 7" fill="none" stroke="#5c6069" stroke-width="1.05" stroke-linecap="round" stroke-linejoin="round"><path d="M.9 1.1L4 4.2 7.1 1.1"/></svg>
<svg class="" style="left:631px;top:10px" width="16" height="16" viewBox="-0.4 -0.4 16 16" fill="none" stroke="#5d616b" stroke-width="1.12"><circle cx="7.5" cy="7.5" r="6.05"/><path d="M7.5 6.8v3.7" stroke-width="1.45"/><circle cx="7.5" cy="4.65" r=".55" fill="#5d616b" stroke-width=".6"/></svg>
<span style="left:659.7px;top:8px;font-size:13.1px;letter-spacing:0.03px;color:#6a6d75;">€0.00</span>
<svg class="" style="left:781px;top:10px" width="16" height="16" viewBox="-0.4 -0.4 16 16" fill="none" stroke="#5d616b" stroke-width="1.12"><circle cx="7.5" cy="7.5" r="6.05"/><path d="M7.5 6.8v3.7" stroke-width="1.45"/><circle cx="7.5" cy="4.65" r=".55" fill="#5d616b" stroke-width=".6"/></svg>
<svg class="" style="left:931px;top:10px" width="16" height="16" viewBox="-0.4 -0.4 16 16" fill="none" stroke="#5d616b" stroke-width="1.12"><circle cx="7.5" cy="7.5" r="6.05"/><path d="M7.5 6.8v3.7" stroke-width="1.45"/><circle cx="7.5" cy="4.65" r=".55" fill="#5d616b" stroke-width=".6"/></svg>
<span style="left:959.7px;top:8px;font-size:13.1px;letter-spacing:0.03px;color:#6a6d75;">€0.00</span>
<svg class="" style="left:1081px;top:10px" width="16" height="16" viewBox="-0.4 -0.4 16 16" fill="none" stroke="#5d616b" stroke-width="1.12"><circle cx="7.5" cy="7.5" r="6.05"/><path d="M7.5 6.8v3.7" stroke-width="1.45"/><circle cx="7.5" cy="4.65" r=".55" fill="#5d616b" stroke-width=".6"/></svg>
<span style="left:1109.7px;top:8px;font-size:13.1px;letter-spacing:0.02px;color:#6a6d75;">€0.00</span>
<svg class="" style="left:1231px;top:10px" width="16" height="16" viewBox="-0.4 -0.4 16 16" fill="none" stroke="#5d616b" stroke-width="1.12"><circle cx="7.5" cy="7.5" r="6.05"/><path d="M7.5 6.8v3.7" stroke-width="1.45"/><circle cx="7.5" cy="4.65" r=".55" fill="#5d616b" stroke-width=".6"/></svg>
<span style="left:1259.7px;top:8px;font-size:13.1px;letter-spacing:0.02px;color:#6a6d75;">€0.00</span>
<span style="left:1377.5px;top:4px;font-size:13.1px;letter-spacing:0.07px;color:#6a6d75;">€0.00</span>
</div>
<div class="r" style="top:532px;background:#fafbfd">
<i class="cb"></i><i class="lp"></i>
<span style="left:72.3px;top:4px;font-size:12.7px;letter-spacing:-0.01px;color:#6a6d75;">Product108</span>
<span style="left:334.7px;top:3px;font-size:14.3px;letter-spacing:-0.43px;color:#1a80a8;">Edit</span>
<svg class="" style="left:481px;top:4px" width="16" height="16" viewBox="-0.3 -0.3 16 16" fill="none" stroke="#5d616b" stroke-width="1.12"><circle cx="7.5" cy="7.5" r="6.05"/><path d="M7.5 6.8v3.7" stroke-width="1.45"/><circle cx="7.5" cy="4.65" r=".55" fill="#5d616b" stroke-width=".6"/></svg>
<span style="left:509.7px;top:2px;font-size:13.1px;letter-spacing:-0.02px;color:#6a6d75;">€0.00</span>
<svg style="left:603px;top:9px" width="9" height="7" viewBox="-0.3 -0.3 9 7" fill="none" stroke="#5c6069" stroke-width="1.05" stroke-linecap="round" stroke-linejoin="round"><path d="M.9 1.1L4 4.2 7.1 1.1"/></svg>
<svg class="" style="left:631px;top:10px" width="16" height="16" viewBox="-0.4 -0.4 16 16" fill="none" stroke="#5d616b" stroke-width="1.12"><circle cx="7.5" cy="7.5" r="6.05"/><path d="M7.5 6.8v3.7" stroke-width="1.45"/><circle cx="7.5" cy="4.65" r=".55" fill="#5d616b" stroke-width=".6"/></svg>
<span style="left:659.7px;top:8px;font-size:13.1px;letter-spacing:0.03px;color:#6a6d75;">€0.00</span>
<svg class="" style="left:781px;top:10px" width="16" height="16" viewBox="-0.4 -0.4 16 16" fill="none" stroke="#5d616b" stroke-width="1.12"><circle cx="7.5" cy="7.5" r="6.05"/><path d="M7.5 6.8v3.7" stroke-width="1.45"/><circle cx="7.5" cy="4.65" r=".55" fill="#5d616b" stroke-width=".6"/></svg>
<svg class="" style="left:931px;top:10px" width="16" height="16" viewBox="-0.4 -0.4 16 16" fill="none" stroke="#5d616b" stroke-width="1.12"><circle cx="7.5" cy="7.5" r="6.05"/><path d="M7.5 6.8v3.7" stroke-width="1.45"/><circle cx="7.5" cy="4.65" r=".55" fill="#5d616b" stroke-width=".6"/></svg>
<span style="left:959.7px;top:8px;font-size:13.1px;letter-spacing:0.03px;color:#6a6d75;">€0.00</span>
<svg class="" style="left:1081px;top:10px" width="16" height="16" viewBox="-0.4 -0.4 16 16" fill="none" stroke="#5d616b" stroke-width="1.12"><circle cx="7.5" cy="7.5" r="6.05"/><path d="M7.5 6.8v3.7" stroke-width="1.45"/><circle cx="7.5" cy="4.65" r=".55" fill="#5d616b" stroke-width=".6"/></svg>
<span style="left:1109.7px;top:8px;font-size:13.1px;letter-spacing:0.02px;color:#6a6d75;">€0.00</span>
<svg class="" style="left:1231px;top:10px" width="16" height="16" viewBox="-0.4 -0.4 16 16" fill="none" stroke="#5d616b" stroke-width="1.12"><circle cx="7.5" cy="7.5" r="6.05"/><path d="M7.5 6.8v3.7" stroke-width="1.45"/><circle cx="7.5" cy="4.65" r=".55" fill="#5d616b" stroke-width=".6"/></svg>
<span style="left:1259.7px;top:8px;font-size:13.1px;letter-spacing:0.02px;color:#6a6d75;">€0.00</span>
<span style="left:1377.5px;top:4px;font-size:13.1px;letter-spacing:0.07px;color:#6a6d75;">€0.00</span>
</div>
<div style="left:314px;top:0;width:10px;height:556px;background:linear-gradient(90deg,rgba(0,0,20,.09),rgba(0,0,20,.03) 50%,rgba(0,0,0,0))"></div>
</div>
<div style="left:1478px;top:232px;width:25px;height:556px;background:#f1f1f1"></div>
<div style="left:1480px;top:257px;width:21px;height:33px;background:#c1c1c1"></div>
<div style="left:1478px;top:232px;width:6px;height:562px;background:linear-gradient(90deg,rgba(0,0,0,.03),rgba(0,0,0,.13))"></div>
<svg style="left:1484px;top:241px" width="13" height="8" viewBox="-0.5 -0.5 13 8"><path d="M0 6.5L6 .5l6 6z" fill="#a3a3a3"/></svg>
<svg style="left:1484px;top:771px" width="13" height="8" viewBox="-0.5 -0.5 13 8"><path d="M0 .5L6 6.5l6-6z" fill="#505050"/></svg>
<div style="left:17px;top:788px;width:1461px;height:25px;background:#f1f1f1;border-radius:0 0 0 3px"></div>
<div style="left:1478px;top:788px;width:25px;height:25px;background:#dcdcdc;border-radius:0 0 3px 0"></div>
<div style="left:1478px;top:788px;width:6px;height:6px;background:linear-gradient(90deg,rgba(0,0,0,.02),rgba(0,0,0,.08))"></div>
<div style="left:549px;top:790px;width:514px;height:21px;background:#c1c1c1"></div>
<div style="left:331px;top:788px;width:10px;height:6px;background:linear-gradient(90deg,rgba(0,0,20,.09),rgba(0,0,20,.03) 50%,rgba(0,0,0,0))"></div>
<svg style="left:25px;top:794px" width="8" height="13" viewBox="-0.5 -0.5 8 13"><path d="M6.5 0L.5 6l6 6z" fill="#505050"/></svg>
<svg style="left:1462px;top:794px" width="8" height="13" viewBox="-0.5 -0.5 8 13"><path d="M.5 0L6.5 6l-6 6z" fill="#505050"/></svg>
<span style="left:32.6px;top:830px;font-size:13.2px;letter-spacing:0.04px;color:#6b7282;">567 rows</span>
<div style="left:1167px;top:828px;width:103px;height:24px;border:1px solid #d9d9d9;border-radius:4px;box-sizing:border-box"></div>
<span style="left:1175.3px;top:831px;font-size:13.7px;letter-spacing:0.28px;color:#5d6577;">300 / page</span>
<svg style="left:1247px;top:836px" width="14" height="10" viewBox="0 0 14 10" fill="none" stroke="#c0c4cc" stroke-width="1.1" stroke-linecap="round" stroke-linejoin="round"><path d="M2 1.9L6.6 7.4 11.2 1.9"/></svg>
<svg style="left:1293px;top:833px" width="11" height="15" viewBox="0 0 11 15" fill="none" stroke="#c0c4cc" stroke-width="1.15" stroke-linecap="round" stroke-linejoin="round"><path d="M7.7 2.7L2.5 7.1l5.2 4.4"/></svg>
<div style="left:1310px;top:828px;width:24px;height:24px;background:#0078a3;border-radius:4px"></div>
<span style="left:1319.2px;top:831px;font-size:13px;font-weight:700;color:#fff;">1</span>
<span style="left:1342.4px;top:831px;font-size:13px;color:#5f6470;">2</span>
<svg style="left:1365px;top:833px" width="11" height="15" viewBox="0 0 11 15" fill="none" stroke="#3d4045" stroke-width="1.3" stroke-linecap="round" stroke-linejoin="round"><path d="M2.6 2.7L7.8 7.1 2.6 11.5"/></svg>
<span style="left:1405.2px;top:831px;font-size:12.6px;letter-spacing:0.02px;color:#62656c;">Go to</span>
<div style="left:1444px;top:828px;width:44px;height:24px;border:1px solid #d9d9d9;border-radius:4px;box-sizing:border-box"></div>
<div style="left:1520px;top:120px;width:1px;height:739px;background:#e1e2e7"></div>
<div style="left:1521px;top:120px;width:399px;height:79px;background:#f4f5f7"></div>
<div style="left:1521px;top:199px;width:399px;height:1px;background:#e9eaef"></div>
<div style="left:1510px;top:134px;width:24px;height:24px;background:#fff;border-radius:4px;box-shadow:0 1px 4px rgba(20,30,60,.18)"></div>
<svg style="left:1517px;top:140px" width="11" height="13" viewBox="0 0 11 13" fill="none" stroke="#555963" stroke-width="1.3" stroke-linecap="round" stroke-linejoin="round"><path d="M3 2.4L7.5 6.2 3 10"/></svg>
<span style="left:1545.3px;top:138px;font-size:17.4px;letter-spacing:0.46px;color:#24272c;-webkit-text-stroke:0.55px #24272c;">Detail &amp; Settings</span>
<span style="left:1545.2px;top:173px;font-size:13.3px;font-weight:700;letter-spacing:-0.03px;color:#2d3036;">Details</span>
<span style="left:1608.6px;top:173px;font-size:13.7px;letter-spacing:-0.03px;color:#6d7078;">Input Parameters</span>
<span style="left:1734.2px;top:173px;font-size:13.7px;color:#6d7078;">Calculations</span>
<div style="left:1545px;top:198px;width:43px;height:2px;background:#0f7aa5"></div>
<span style="left:1545.2px;top:224px;font-size:12.9px;letter-spacing:-0.01px;color:#30333a;-webkit-text-stroke:0.18px #30333a;">Quote Type</span>
<span style="left:1545.2px;top:247px;font-size:13.7px;letter-spacing:0.07px;color:#6a6d75;">(Default)</span>
<span style="left:1545.2px;top:282px;font-size:12.7px;letter-spacing:-0.02px;color:#30333a;-webkit-text-stroke:0.18px #30333a;">Created By</span>
<span style="left:1545.2px;top:305px;font-size:13.7px;letter-spacing:0.3px;color:#6a6d75;">petr.uchytil</span>
<span style="left:1545.2px;top:340px;font-size:13px;letter-spacing:0.06px;color:#30333a;-webkit-text-stroke:0.18px #30333a;">Status</span>
<span style="left:1545.2px;top:363px;font-size:13.7px;letter-spacing:0.15px;color:#6a6d75;">Draft</span>
<span style="left:1546.2px;top:398px;font-size:12.8px;letter-spacing:0.02px;color:#30333a;-webkit-text-stroke:0.18px #30333a;">Workflow Status</span>
<span style="left:1545.2px;top:421px;font-size:13.7px;letter-spacing:0.15px;color:#6a6d75;">Draft</span>
<span style="left:1545.2px;top:456px;font-size:13px;letter-spacing:0.01px;color:#30333a;-webkit-text-stroke:0.18px #30333a;">Effective Date</span>
<span style="left:1546.2px;top:479px;font-size:13.7px;letter-spacing:0.76px;color:#6a6d75;">05/02/2021</span>
<span style="left:1545.2px;top:514px;font-size:12.7px;letter-spacing:0.01px;color:#30333a;-webkit-text-stroke:0.18px #30333a;">Expiry Date</span>
<span style="left:1546.2px;top:537px;font-size:13.7px;letter-spacing:0.76px;color:#6a6d75;">08/03/2021</span>
<span style="left:1545.2px;top:572px;font-size:12.8px;letter-spacing:0.02px;color:#30333a;-webkit-text-stroke:0.18px #30333a;">Last Update Date</span>
<span style="left:1546.2px;top:595px;font-size:13.7px;letter-spacing:0.69px;color:#6a6d75;">05/02/2021 16:39</span>
<span style="left:1545.2px;top:630px;font-size:12.9px;letter-spacing:-0.01px;color:#30333a;-webkit-text-stroke:0.18px #30333a;">User Group (Edit/View)</span>
<span style="left:1545.2px;top:653px;font-size:13.7px;letter-spacing:0.82px;color:#6a6d75;">- / -</span>
<span style="left:1545.2px;top:688px;font-size:12.9px;letter-spacing:-0.01px;color:#30333a;-webkit-text-stroke:0.18px #30333a;">Signature Status</span>
</body></html>
